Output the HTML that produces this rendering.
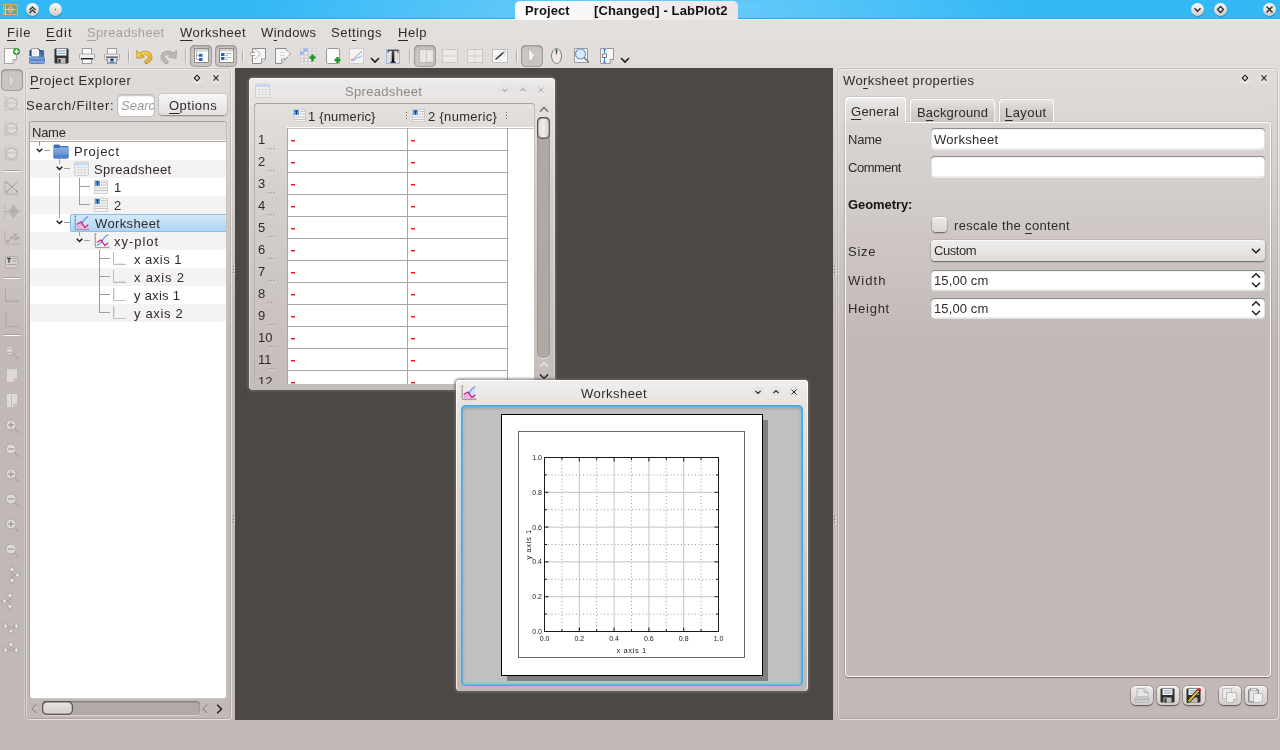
<!DOCTYPE html>
<html><head><meta charset="utf-8">
<style>
*{box-sizing:border-box}
html,body{margin:0;padding:0}
body{width:1280px;height:750px;position:relative;overflow:hidden;font-family:"Liberation Sans",sans-serif;font-size:13px;color:#2f2b2a;
background:linear-gradient(to bottom,#e3e0de 19px,#dedad8 90px,#d2ccca 200px,#c2b9b6 340px,#c2b9b6 750px)}
.a{position:absolute}
.t{position:absolute;white-space:pre;line-height:15px;height:15px;will-change:transform}
.ul{text-decoration:underline;text-decoration-thickness:1px;text-underline-offset:3px}
svg{overflow:visible}
</style></head><body>
<div class="a" style="left:0;top:0;width:1280px;height:18px;background:#33b8f6"></div>
<div class="a" style="left:250px;top:0;width:780px;height:18px;background:radial-gradient(ellipse 390px 40px at 50% 50%,rgba(140,215,250,0.75),rgba(51,184,246,0))"></div>
<div class="a" style="left:0;top:18px;width:1280px;height:1px;background:#25a9e6"></div>
<div class="a" style="left:0;top:19px;width:1280px;height:1px;background:#e9f3f7"></div>
<div class="a" style="left:515px;top:1px;width:223px;height:19px;border-radius:5px 5px 0 0;background:linear-gradient(100deg,#ffffff,#f1efee 60%,#e9e6e4)"></div>
<div class="a" style="left:640px;top:1px;width:220px;height:17px;background:linear-gradient(90deg,rgba(255,255,255,0),rgba(255,255,255,0))"></div>
<div class="t" style="left:525px;top:3px;font-weight:bold;letter-spacing:0.1px;color:#111">Project</div>
<div class="t" style="left:594px;top:3px;font-weight:bold;letter-spacing:0.15px;color:#111">[Changed] - LabPlot2</div>
<svg class="a" style="left:3px;top:4px" width="15" height="11" viewBox="0 0 15 11">
<rect x="0" y="0" width="15" height="11" fill="#dcae62"/>
<rect x="1.2" y="1.2" width="12.6" height="8.6" fill="#77a070"/>
<path d="M7.5 1.8 L10.5 5.5 L7.5 9.2 L4.5 5.5Z" fill="#e09088" stroke="#f2d8d0" stroke-width="0.6"/><path d="M2 5.5 H13" stroke="#f0c8c0" stroke-width="0.8"/>
<path d="M2.5 1.5 V11" stroke="#e8f0e8" stroke-width="0.9" opacity="0.8"/></svg>
<svg class="a" style="left:24.5px;top:1.5px;opacity:1.0" width="16.0" height="16.0" viewBox="-7.5 -7.5 16.0 16.0">
<defs><linearGradient id="cg32" x1="0" y1="0" x2="0" y2="1"><stop offset="0" stop-color="#fbfbfb"/><stop offset="1" stop-color="#cfcbc9"/></linearGradient></defs>
<circle cx="0.3" cy="0.8" r="6.5" fill="#000" opacity="0.25"/>
<circle cx="0" cy="0" r="6.5" fill="url(#cg32)"/><path d="M-3 0.5 L0 -2.5 L3 0.5 M-3 3.5 L0 0.5 L3 3.5" stroke="#2a2726" stroke-width="1.2" fill="none"/></svg>
<svg class="a" style="left:47.5px;top:1.5px;opacity:1.0" width="16.0" height="16.0" viewBox="-7.5 -7.5 16.0 16.0">
<defs><linearGradient id="cg55" x1="0" y1="0" x2="0" y2="1"><stop offset="0" stop-color="#fbfbfb"/><stop offset="1" stop-color="#cfcbc9"/></linearGradient></defs>
<circle cx="0.3" cy="0.8" r="6.5" fill="#000" opacity="0.25"/>
<circle cx="0" cy="0" r="6.5" fill="url(#cg55)"/><circle cx="0" cy="0" r="0.7" fill="#555"/></svg>
<svg class="a" style="left:1189.5px;top:1.5px;opacity:1.0" width="16.0" height="16.0" viewBox="-7.5 -7.5 16.0 16.0">
<defs><linearGradient id="cg1197" x1="0" y1="0" x2="0" y2="1"><stop offset="0" stop-color="#fbfbfb"/><stop offset="1" stop-color="#cfcbc9"/></linearGradient></defs>
<circle cx="0.3" cy="0.8" r="6.5" fill="#000" opacity="0.25"/>
<circle cx="0" cy="0" r="6.5" fill="url(#cg1197)"/><path d="M-3 -1.2 L0 1.8 L3 -1.2" stroke="#2a2726" stroke-width="1.3" fill="none"/></svg>
<svg class="a" style="left:1212.5px;top:1.5px;opacity:1.0" width="16.0" height="16.0" viewBox="-7.5 -7.5 16.0 16.0">
<defs><linearGradient id="cg1220" x1="0" y1="0" x2="0" y2="1"><stop offset="0" stop-color="#fbfbfb"/><stop offset="1" stop-color="#cfcbc9"/></linearGradient></defs>
<circle cx="0.3" cy="0.8" r="6.5" fill="#000" opacity="0.25"/>
<circle cx="0" cy="0" r="6.5" fill="url(#cg1220)"/><path d="M0 -3 L3 0 L0 3 L-3 0Z" stroke="#2a2726" stroke-width="1.3" fill="none"/></svg>
<svg class="a" style="left:1261.5px;top:1.5px;opacity:1.0" width="16.0" height="16.0" viewBox="-7.5 -7.5 16.0 16.0">
<defs><linearGradient id="cg1269" x1="0" y1="0" x2="0" y2="1"><stop offset="0" stop-color="#fbfbfb"/><stop offset="1" stop-color="#cfcbc9"/></linearGradient></defs>
<circle cx="0.3" cy="0.8" r="6.5" fill="#000" opacity="0.25"/>
<circle cx="0" cy="0" r="6.5" fill="url(#cg1269)"/><path d="M-3 -3 L3 3 M3 -3 L-3 3" stroke="#2a2726" stroke-width="1.3" fill="none"/></svg>
<div class="t" style="left:7.20px;top:25.00px;letter-spacing:0.882px;"><span class="ul">F</span>ile</div>
<div class="t" style="left:46.20px;top:25.00px;letter-spacing:1.098px;"><span class="ul">E</span>dit</div>
<div class="t" style="left:87.20px;top:25.00px;letter-spacing:0.347px;color:#a5a19f;"><span class="ul">S</span>preadsheet</div>
<div class="t" style="left:179.70px;top:25.00px;letter-spacing:0.462px;"><span class="ul">W</span>orksheet</div>
<div class="t" style="left:261.20px;top:25.00px;letter-spacing:0.375px;">W<span class="ul">i</span>ndows</div>
<div class="t" style="left:331.20px;top:25.00px;letter-spacing:0.517px;">Set<span class="ul">t</span>ings</div>
<div class="t" style="left:397.70px;top:25.00px;letter-spacing:0.550px;"><span class="ul">H</span>elp</div>
<svg class="a" style="left:4px;top:48px;" width="16" height="16" viewBox="0 0 16 16"><path d="M0.5 0.5 H12.5 V11.5 L9 15.5 H0.5Z" fill="#fbfbfb" stroke="#a6a3a2"/><path d="M12.5 11.5 L9 11.5 L9 15.5" fill="#dcdcdc" stroke="#a6a3a2"/><circle cx="12.5" cy="3.5" r="3.5" fill="#1fa81f"/><path d="M12.5 1.3 V5.7 M10.3 3.5 H14.7" stroke="#fff" stroke-width="1.4"/></svg>
<svg class="a" style="left:29px;top:48px;" width="16" height="16" viewBox="0 0 16 16"><path d="M0.5 2 H3 V8 H0.5Z" fill="#1d3e78"/><path d="M2.5 0.5 H9 L12.5 4 V9 H2.5Z" fill="#f4f4f4" stroke="#8d8d8d" stroke-width="0.8"/><path d="M10 2 H15 V9 H10Z" fill="#4a78c0"/><path d="M9 0.5 L15 6.5" stroke="#16356b" stroke-width="1"/><rect x="0.5" y="9" width="15" height="6.5" rx="1" fill="#7fa6dc" stroke="#4e78b8" stroke-width="0.8"/><path d="M1 12 H15" stroke="#3f68a8" stroke-width="1"/></svg>
<svg class="a" style="left:54px;top:48px;" width="16" height="16" viewBox="0 0 16 16"><rect x="0.5" y="0.5" width="14" height="15" rx="1" fill="#2f2f2f"/><rect x="2.5" y="1" width="10" height="6.5" fill="#f2f6fa"/><path d="M3.5 3 H11.5 M3.5 5.3 H11.5" stroke="#7fa0c4" stroke-width="1"/><rect x="3.5" y="10" width="8" height="5.5" fill="#bdbdbd"/><rect x="4.5" y="11" width="2" height="4" fill="#2f2f2f"/></svg>
<svg class="a" style="left:79px;top:48px;" width="16" height="16" viewBox="0 0 16 16"><rect x="3.5" y="0.5" width="9" height="6" fill="#fbfbfb" stroke="#9c9c9c"/><rect x="0.5" y="6" width="15" height="5.5" rx="1" fill="#f0f0f0" stroke="#a8a8a8"/><rect x="2" y="10" width="12" height="1.5" fill="#222"/><rect x="3.5" y="11.5" width="9" height="4" fill="#fafafa" stroke="#9c9c9c"/></svg>
<svg class="a" style="left:104px;top:48px;" width="16" height="16" viewBox="0 0 16 16"><rect x="3.5" y="0.5" width="9" height="6" fill="#fbfbfb" stroke="#9c9c9c"/><rect x="0.5" y="6" width="15" height="5.5" rx="1" fill="#f0f0f0" stroke="#a8a8a8"/><rect x="2" y="8.5" width="12" height="1.2" fill="#444"/><rect x="3.5" y="11.5" width="9" height="4" fill="#fafafa" stroke="#9c9c9c"/><ellipse cx="8" cy="12" rx="5" ry="2.6" fill="#eee" stroke="#666" stroke-width="0.8"/><circle cx="8" cy="12" r="2.1" fill="#2e7fd0"/><circle cx="8" cy="12" r="0.9" fill="#0d2a4a"/></svg>
<div class="a" style="left:128px;top:47px;width:1px;height:18px;background:linear-gradient(rgba(160,152,149,0),#b3aca9 30%,#b3aca9 70%,rgba(160,152,149,0))"></div><div class="a" style="left:129px;top:47px;width:1px;height:18px;background:linear-gradient(rgba(255,255,255,0),#f4f2f1 30%,#f4f2f1 70%,rgba(255,255,255,0))"></div>
<svg class="a" style="left:136px;top:48px;" width="16" height="16" viewBox="0 0 16 16"><defs><linearGradient id="ug" x1="0" y1="0" x2="1" y2="1"><stop offset="0" stop-color="#f7dc55"/><stop offset="1" stop-color="#dcae35"/></linearGradient></defs><path d="M5 6.5 C8.5 3.8 14.5 4.8 14.3 9.2 C14.2 11.5 12.5 12.8 10.5 13.8" stroke="#b88a14" stroke-width="4.2" fill="none" stroke-linecap="round"/><path d="M5 6.5 C8.5 3.8 14.5 4.8 14.3 9.2 C14.2 11.5 12.5 12.8 10.5 13.8" stroke="url(#ug)" stroke-width="3" fill="none" stroke-linecap="round"/><path d="M0.5 2.5 L1 10.5 L8.5 9 Z" fill="url(#ug)" stroke="#b88a14" stroke-width="0.7" stroke-linejoin="round"/></svg>
<svg class="a" style="left:161px;top:48px;" width="16" height="16" viewBox="0 0 16 16"><g transform="translate(16,0) scale(-1,1)"><path d="M5 6.5 C8.5 3.8 14.5 4.8 14.3 9.2 C14.2 11.5 12.5 12.8 10.5 13.8" stroke="#a29f9d" stroke-width="4.2" fill="none" stroke-linecap="round"/><path d="M5 6.5 C8.5 3.8 14.5 4.8 14.3 9.2 C14.2 11.5 12.5 12.8 10.5 13.8" stroke="#bcb9b7" stroke-width="3" fill="none" stroke-linecap="round"/><path d="M0.5 2.5 L1 10.5 L8.5 9 Z" fill="#bcb9b7" stroke="#a29f9d" stroke-width="0.7" stroke-linejoin="round"/></g></svg>
<div class="a" style="left:185px;top:47px;width:1px;height:18px;background:linear-gradient(rgba(160,152,149,0),#b3aca9 30%,#b3aca9 70%,rgba(160,152,149,0))"></div><div class="a" style="left:186px;top:47px;width:1px;height:18px;background:linear-gradient(rgba(255,255,255,0),#f4f2f1 30%,#f4f2f1 70%,rgba(255,255,255,0))"></div>
<div class="a" style="left:190px;top:45px;width:22px;height:22px;border-radius:5px;background:#cbc5c2;box-shadow:inset 0 0 0 1px #a39c99, inset 0 1px 2px rgba(0,0,0,0.4)"></div>
<svg class="a" style="left:194px;top:48px;" width="15" height="15" viewBox="0 0 15 15"><rect x="0.5" y="0.5" width="14" height="14" fill="#fff" stroke="#8f8c8b"/><rect x="1" y="1" width="13" height="2.5" fill="#d3d3d3"/><path d="M2.5 3.5 V11.5 H5 M2.5 7.5 H5" stroke="#999" stroke-width="0.8" fill="none"/><rect x="5" y="5.8" width="3.5" height="3" fill="#1e63d6"/><rect x="5" y="10" width="3.5" height="3" fill="#1e63d6"/></svg>
<div class="a" style="left:215px;top:45px;width:22px;height:22px;border-radius:5px;background:#cbc5c2;box-shadow:inset 0 0 0 1px #a39c99, inset 0 1px 2px rgba(0,0,0,0.4)"></div>
<svg class="a" style="left:219px;top:48px;" width="15" height="15" viewBox="0 0 15 15"><rect x="0.5" y="0.5" width="14" height="14" fill="#fff" stroke="#8f8c8b"/><rect x="1" y="1" width="13" height="2.5" fill="#d3d3d3"/><rect x="2" y="5" width="3.5" height="3" fill="#1e63d6"/><rect x="2" y="9" width="3.5" height="3" fill="#1e63d6"/><path d="M6.5 5.5 H12 M6.5 7.5 H9 M6.5 9.5 H12 M6.5 11.5 H9" stroke="#9c9c9c" stroke-width="0.8"/></svg>
<div class="a" style="left:242px;top:47px;width:1px;height:18px;background:linear-gradient(rgba(160,152,149,0),#b3aca9 30%,#b3aca9 70%,rgba(160,152,149,0))"></div><div class="a" style="left:243px;top:47px;width:1px;height:18px;background:linear-gradient(rgba(255,255,255,0),#f4f2f1 30%,#f4f2f1 70%,rgba(255,255,255,0))"></div>
<svg class="a" style="left:250px;top:48px;" width="16" height="16" viewBox="0 0 16 16"><path d="M2.5 0.5 H15.5 V11 L11 15.5 H2.5Z" fill="#f7f7f7" stroke="#8e8b8a"/><path d="M15.5 11 H11.5 V15.5" fill="#e4e4e4" stroke="#8e8b8a" stroke-width="0.8"/><rect x="0.5" y="4.5" width="6" height="3" rx="1.2" fill="#fdfdfd" stroke="#8e8b8a" stroke-width="0.8"/><path d="M5 0.8 L10.5 6 L5 11.2 Z" fill="#fbfbfb"/><path d="M5 0.8 L10.5 6 L5 11.2" stroke="#777" stroke-width="0.9" fill="none" stroke-dasharray="1.2 0.8"/><rect x="1.3" y="5.3" width="5" height="1.5" fill="#fdfdfd"/></svg>
<svg class="a" style="left:275px;top:48px;" width="16" height="16" viewBox="0 0 16 16"><path d="M0.5 0.5 H11 V11 L6.5 15.5 H0.5Z" fill="#f5f5f5" stroke="#8e8b8a"/><path d="M10.5 11 L6.5 11 V15.5" fill="#e4e4e4" stroke="#8e8b8a" stroke-width="0.8"/><path d="M10 0.5 L15.5 6 L10 11.5 Z" fill="#fafafa"/><path d="M10 0.5 L15.5 6 L10 11.5" stroke="#555" stroke-width="0.9" fill="none" stroke-dasharray="1.2 0.8"/><path d="M5 4.5 H10.5 M5 7.5 H10.5" stroke="#d0d0d0" stroke-width="0.8"/></svg>
<svg class="a" style="left:300px;top:48px;" width="16" height="16" viewBox="0 0 16 16"><rect x="0.5" y="0.5" width="3.3" height="2.7" fill="#ececec" stroke="#c8c8c8" stroke-width="0.5"/><rect x="4.5" y="0.5" width="3.3" height="2.7" fill="#ececec" stroke="#c8c8c8" stroke-width="0.5"/><rect x="8.5" y="0.5" width="3.3" height="2.7" fill="#ececec" stroke="#c8c8c8" stroke-width="0.5"/><rect x="12.5" y="0.5" width="3.3" height="2.7" fill="#ececec" stroke="#c8c8c8" stroke-width="0.5"/><rect x="0.5" y="3.8" width="3.3" height="2.7" fill="#ececec" stroke="#c8c8c8" stroke-width="0.5"/><rect x="4.5" y="3.8" width="3.3" height="2.7" fill="#ececec" stroke="#c8c8c8" stroke-width="0.5"/><rect x="8.5" y="3.8" width="3.3" height="2.7" fill="#ececec" stroke="#c8c8c8" stroke-width="0.5"/><rect x="12.5" y="3.8" width="3.3" height="2.7" fill="#ececec" stroke="#c8c8c8" stroke-width="0.5"/><rect x="0.5" y="7.1" width="3.3" height="2.7" fill="#ececec" stroke="#c8c8c8" stroke-width="0.5"/><rect x="4.5" y="7.1" width="3.3" height="2.7" fill="#ececec" stroke="#c8c8c8" stroke-width="0.5"/><rect x="8.5" y="7.1" width="3.3" height="2.7" fill="#ececec" stroke="#c8c8c8" stroke-width="0.5"/><rect x="12.5" y="7.1" width="3.3" height="2.7" fill="#ececec" stroke="#c8c8c8" stroke-width="0.5"/><rect x="0.5" y="10.399999999999999" width="3.3" height="2.7" fill="#ececec" stroke="#c8c8c8" stroke-width="0.5"/><rect x="4.5" y="10.399999999999999" width="3.3" height="2.7" fill="#ececec" stroke="#c8c8c8" stroke-width="0.5"/><rect x="8.5" y="10.399999999999999" width="3.3" height="2.7" fill="#ececec" stroke="#c8c8c8" stroke-width="0.5"/><rect x="12.5" y="10.399999999999999" width="3.3" height="2.7" fill="#ececec" stroke="#c8c8c8" stroke-width="0.5"/><rect x="0.5" y="13.7" width="3.3" height="2.7" fill="#ececec" stroke="#c8c8c8" stroke-width="0.5"/><rect x="4.5" y="13.7" width="3.3" height="2.7" fill="#ececec" stroke="#c8c8c8" stroke-width="0.5"/><rect x="8.5" y="13.7" width="3.3" height="2.7" fill="#ececec" stroke="#c8c8c8" stroke-width="0.5"/><rect x="12.5" y="13.7" width="3.3" height="2.7" fill="#ececec" stroke="#c8c8c8" stroke-width="0.5"/><rect x="3.5" y="0.5" width="4" height="3" fill="#8fb3f0"/><rect x="0" y="3.5" width="3.5" height="3" fill="#8fb3f0"/><path d="M9.5 9.5 H15.5 M12.5 6.5 V13.5" stroke="#1d9a1d" stroke-width="2.4"/></svg>
<svg class="a" style="left:326px;top:48px;" width="15" height="16" viewBox="0 0 15 16"><rect x="0.5" y="0.5" width="13" height="15" rx="1" fill="#fafafa" stroke="#9c9998"/><path d="M8.5 12 H14.5 M11.5 9 V15" stroke="#1d9a1d" stroke-width="2.4"/></svg>
<svg class="a" style="left:349px;top:48px;" width="15" height="16" viewBox="0 0 15 16"><rect x="0.5" y="0.5" width="14" height="15" fill="#f3f3f3" stroke="#b5b2b1" stroke-dasharray="1 1"/><path d="M2 11.5 L5 11 L7.5 8 L11 5 L13 3" stroke="#d880c8" stroke-width="1" fill="none"/><path d="M2 13 L5 12.5 L8 10 L11 9 L13 8" stroke="#8eb4ec" stroke-width="1" fill="none"/></svg>
<svg class="a" style="left:370px;top:57px;" width="10" height="7" viewBox="0 0 10 7"><path d="M1 1 L5 5 L9 1" stroke="#1f1c1b" stroke-width="1.6" fill="none"/></svg>
<svg class="a" style="left:385px;top:48px;" width="16" height="16" viewBox="0 0 16 16"><defs><linearGradient id="tg" x1="0" y1="0" x2="0" y2="1"><stop offset="0" stop-color="#555"/><stop offset="1" stop-color="#000"/></linearGradient></defs><path d="M1.5 1 V15.5 M14.5 1 V15.5 M0.5 15.5 H15.5" stroke="#8cb4ee" stroke-width="0.8"/><path d="M2.5 1.5 H13.5 V4.5 L12.5 4.5 L11.8 3 H9.3 V13.5 L10.8 14 V14.8 H5.2 V14 L6.7 13.5 V3 H4.2 L3.5 4.5 H2.5Z" fill="url(#tg)"/></svg>
<div class="a" style="left:409px;top:47px;width:1px;height:18px;background:linear-gradient(rgba(160,152,149,0),#b3aca9 30%,#b3aca9 70%,rgba(160,152,149,0))"></div><div class="a" style="left:410px;top:47px;width:1px;height:18px;background:linear-gradient(rgba(255,255,255,0),#f4f2f1 30%,#f4f2f1 70%,rgba(255,255,255,0))"></div>
<div class="a" style="left:414px;top:45px;width:22px;height:22px;border-radius:5px;background:#cbc5c2;box-shadow:inset 0 0 0 1px #a39c99, inset 0 1px 2px rgba(0,0,0,0.4)"></div>
<svg class="a" style="left:419px;top:49px;" width="15" height="14" viewBox="0 0 15 14"><rect x="0.5" y="0.5" width="14" height="13" fill="#e9e6e4" stroke="#bbb6b4"/><path d="M7.5 0.5 V13.5" stroke="#cfcac8"/></svg>
<svg class="a" style="left:442px;top:49px;" width="16" height="14" viewBox="0 0 16 14"><rect x="0.5" y="0.5" width="15" height="13" fill="#ece9e8" stroke="#cac6c4"/><path d="M0.5 7 H15.5" stroke="#d3cfcd"/></svg>
<svg class="a" style="left:467px;top:49px;" width="16" height="14" viewBox="0 0 16 14"><rect x="0.5" y="0.5" width="15" height="13" fill="#ece9e8" stroke="#cac6c4"/><path d="M0.5 7 H15.5 M8 0.5 V13.5" stroke="#d3cfcd"/></svg>
<svg class="a" style="left:492px;top:49px;" width="16" height="14" viewBox="0 0 16 14"><rect x="0.5" y="0.5" width="15" height="13" fill="#fbfbfb" stroke="#c1bdbb"/><path d="M0.5 7 H15.5 M8 0.5 V13.5" stroke="#e3e0de"/><path d="M3.5 10.5 L11.5 3.5" stroke="#333" stroke-width="1.6"/><path d="M10.5 2 L13.5 2.5 L12.5 5.5" stroke="#bbb" stroke-width="1" fill="none"/></svg>
<div class="a" style="left:516px;top:47px;width:1px;height:18px;background:linear-gradient(rgba(160,152,149,0),#b3aca9 30%,#b3aca9 70%,rgba(160,152,149,0))"></div><div class="a" style="left:517px;top:47px;width:1px;height:18px;background:linear-gradient(rgba(255,255,255,0),#f4f2f1 30%,#f4f2f1 70%,rgba(255,255,255,0))"></div>
<div class="a" style="left:521px;top:45px;width:22px;height:22px;border-radius:5px;background:#cbc5c2;box-shadow:inset 0 0 0 1px #a39c99, inset 0 1px 2px rgba(0,0,0,0.4)"></div>
<svg class="a" style="left:527px;top:48px;" width="10" height="14" viewBox="0 0 10 14"><path d="M1.5 0.5 L9 8.5 L6 9 L5.5 13.5 L1.5 11 Z" fill="#f2f2f2" stroke="#b8b4b2" stroke-width="0.8"/></svg>
<svg class="a" style="left:551px;top:48px;" width="11" height="16" viewBox="0 0 11 16"><ellipse cx="5.5" cy="8" rx="5" ry="7.5" fill="#eaeaea" stroke="#7f7c7b"/><path d="M5.5 0.8 V6" stroke="#666" stroke-width="1"/><rect x="4.7" y="2" width="1.6" height="2.8" fill="#444"/><circle cx="5.5" cy="6" r="0.7" fill="#d44"/></svg>
<svg class="a" style="left:574px;top:48px;" width="16" height="16" viewBox="0 0 16 16"><path d="M0.5 0.5 H13.5 V14.5 H0.5Z" fill="#f6f6f6" stroke="#9a9796"/><circle cx="6.5" cy="6" r="5" fill="#d8ecfc" stroke="#6c9cd8" stroke-width="1.2"/><path d="M10 9.5 L15 14.5" stroke="#777" stroke-width="1.4"/></svg>
<svg class="a" style="left:600px;top:48px;" width="14" height="16" viewBox="0 0 14 16"><path d="M0.5 0.5 H13.5 V11.5 L10 15.5 H0.5Z" fill="#f8f8f8" stroke="#9a9796"/><path d="M13.5 11.5 L10 11.5 L10 15.5" fill="#e0e0e0" stroke="#9a9796"/><path d="M4.5 1 V5.5 M4.5 10 V15" stroke="#2a7ee8" stroke-width="1"/><path d="M3 2.5 L4.5 1 L6 2.5 M3 13.5 L4.5 15 L6 13.5" stroke="#2a7ee8" stroke-width="1" fill="none"/><rect x="2.5" y="6" width="4" height="3.5" fill="#fff" stroke="#666" stroke-width="0.8"/></svg>
<svg class="a" style="left:620px;top:57px;" width="10" height="7" viewBox="0 0 10 7"><path d="M1 1 L5 5 L9 1" stroke="#1f1c1b" stroke-width="1.6" fill="none"/></svg>
<div class="a" style="left:235px;top:68px;width:598px;height:652px;background:#4c4845"></div>
<div class="a" style="left:1px;top:69px;width:22px;height:22px;border-radius:5px;background:#cbc5c2;box-shadow:inset 0 0 0 1px #a39c99, inset 0 1px 2px rgba(0,0,0,0.4)"></div>
<svg class="a" style="left:7px;top:73px;" width="10" height="14" viewBox="0 0 10 14"><path d="M1.5 0.5 L9 8.5 L6 9 L5.5 13.5 L1.5 11 Z" fill="#d8d4d2" stroke="#bdb8b6" stroke-width="0.8"/></svg>
<svg class="a" style="left:4px;top:96px;" width="15" height="15" viewBox="0 0 15 15"><circle cx="7.5" cy="7.5" r="5.5" fill="#dedad8" stroke="#a8a3a1" stroke-width="0.8"/><path d="M3 7 H12" stroke="#c6c1bf" stroke-width="1"/><path d="M1 1 L3 3 M14 1 L12 3 M1 14 L3 12 M14 14 L12 12 M1 14 H14 M1 1 V14" stroke="#a8a3a1" stroke-width="0.7" stroke-dasharray="1 1" fill="none"/></svg>
<svg class="a" style="left:4px;top:121px;" width="15" height="15" viewBox="0 0 15 15"><circle cx="7.5" cy="7.5" r="5.5" fill="#dedad8" stroke="#a8a3a1" stroke-width="0.8"/><path d="M3 7 H12" stroke="#c6c1bf" stroke-width="1"/><path d="M1 1 L3 3 M14 1 L12 3 M1 14 L3 12 M14 14 L12 12 M1 14 H14 M1 1 V14" stroke="#a8a3a1" stroke-width="0.7" stroke-dasharray="1 1" fill="none"/></svg>
<svg class="a" style="left:4px;top:146px;" width="15" height="15" viewBox="0 0 15 15"><circle cx="7.5" cy="7.5" r="5.5" fill="#dedad8" stroke="#a8a3a1" stroke-width="0.8"/><path d="M3 7 H12" stroke="#c6c1bf" stroke-width="1"/><path d="M1 1 L3 3 M14 1 L12 3 M1 14 L3 12 M14 14 L12 12 M1 14 H14 M1 1 V14" stroke="#a8a3a1" stroke-width="0.7" stroke-dasharray="1 1" fill="none"/></svg>
<div class="a" style="left:1px;top:170px;width:22px;height:1px;background:linear-gradient(90deg,rgba(170,162,159,0),#a69e9b 30%,#a69e9b 70%,rgba(170,162,159,0))"></div><div class="a" style="left:1px;top:171px;width:22px;height:1px;background:linear-gradient(90deg,rgba(255,255,255,0),#ffffff 30%,#ffffff 70%,rgba(255,255,255,0))"></div>
<svg class="a" style="left:4px;top:180px;" width="16" height="16" viewBox="0 0 16 16"><path d="M1 0.5 V14 H15.5" stroke="#a8a3a1" stroke-width="0.8" fill="none" stroke-dasharray="1 0.6"/><path d="M0 3 H1 M0 6 H1 M0 9 H1 M4 14 V15 M7 14 V15 M10 14 V15 M13 14 V15" stroke="#a8a3a1" stroke-width="0.7"/><path d="M2.5 2.5 L6.5 5.5 L13 11.5 M2.5 12 L8 7 L13 2.5" stroke="#a49f9d" stroke-width="1" fill="none"/><g fill="#9a9593"><circle cx="2.5" cy="2.5" r="1"/><circle cx="13" cy="11.5" r="1"/><circle cx="2.5" cy="12" r="1"/><circle cx="6.5" cy="5.5" r="0.8"/></g></svg>
<svg class="a" style="left:4px;top:204px;" width="16" height="16" viewBox="0 0 16 16"><path d="M1 0.5 V15" stroke="#a8a3a1" stroke-width="0.8" stroke-dasharray="1 0.6"/><path d="M9.5 1 L14 7.5 L9.5 14 L5 7.5Z" fill="#c3bdba" stroke="#aaa4a2" stroke-width="0.8"/><path d="M1 7.5 H16" stroke="#a8a3a1" stroke-width="0.8"/><path d="M9.5 3.5 L12 7.5 L9.5 11.5 L7 7.5Z" fill="#b3adaa"/></svg>
<svg class="a" style="left:4px;top:230px;" width="16" height="16" viewBox="0 0 16 16"><path d="M1 0.5 V14 H15.5" stroke="#a8a3a1" stroke-width="0.8" fill="none" stroke-dasharray="1 0.6"/><path d="M0 3 H1 M0 6 H1 M0 9 H1 M4 14 V15 M7 14 V15 M10 14 V15 M13 14 V15" stroke="#a8a3a1" stroke-width="0.7"/><path d="M2 13 L14 3" stroke="#b2acaa" stroke-width="0.8"/><g fill="none" stroke="#9a9593" stroke-width="0.8"><circle cx="7.5" cy="8" r="1"/><circle cx="11" cy="5" r="1"/><circle cx="11.5" cy="9" r="1"/><circle cx="4" cy="11" r="1"/><circle cx="14" cy="7.5" r="0.9"/></g></svg>
<svg class="a" style="left:5px;top:256px;" width="14" height="13" viewBox="0 0 14 13"><rect x="0.5" y="0.5" width="12.5" height="11.5" rx="1" fill="#d6d1cf" stroke="#a9a3a1" stroke-width="0.8"/><path d="M2 2.3 H6 M4 2.3 V6.8" stroke="#3d3a39" stroke-width="1.3"/><path d="M7.5 2.5 H11.5 M7.5 5 H11.5 M2 8.5 H11.5" stroke="#9c9795" stroke-width="0.8"/></svg>
<div class="a" style="left:1px;top:277px;width:22px;height:1px;background:linear-gradient(90deg,rgba(170,162,159,0),#a69e9b 30%,#a69e9b 70%,rgba(170,162,159,0))"></div><div class="a" style="left:1px;top:278px;width:22px;height:1px;background:linear-gradient(90deg,rgba(255,255,255,0),#ffffff 30%,#ffffff 70%,rgba(255,255,255,0))"></div>
<svg class="a" style="left:4px;top:287px;" width="16" height="15" viewBox="0 0 16 15"><path d="M1.5 0.5 V14.5 H15" stroke="#a8a3a1" stroke-width="0.8" fill="none"/><path d="M4 14 V12.5 M7 14 V12.5 M10 14 V12.5 M13 14 V12.5" stroke="#a8a3a1" stroke-width="0.8"/></svg>
<svg class="a" style="left:4px;top:312px;" width="16" height="15" viewBox="0 0 16 15"><path d="M1.5 0.5 V14.5 H15" stroke="#a8a3a1" stroke-width="0.8" fill="none"/><path d="M2 3 H3.5 M2 6 H3.5 M2 9 H3.5 M2 12 H3.5" stroke="#a8a3a1" stroke-width="0.8"/></svg>
<div class="a" style="left:1px;top:334px;width:22px;height:1px;background:linear-gradient(90deg,rgba(170,162,159,0),#a69e9b 30%,#a69e9b 70%,rgba(170,162,159,0))"></div><div class="a" style="left:1px;top:335px;width:22px;height:1px;background:linear-gradient(90deg,rgba(255,255,255,0),#ffffff 30%,#ffffff 70%,rgba(255,255,255,0))"></div>
<svg class="a" style="left:4px;top:345px;" width="16" height="14" viewBox="0 0 16 14"><circle cx="5.5" cy="5.5" r="4.5" fill="#dedad8" stroke="#a8a3a1" stroke-width="0.9"/><rect x="3" y="3.5" width="5" height="4" fill="none" stroke="#a8a3a1" stroke-width="0.7"/><path d="M9 9 L14 13.5" stroke="#a8a3a1" stroke-width="1.2"/></svg>
<svg class="a" style="left:6px;top:368px;" width="12" height="15" viewBox="0 0 12 15"><path d="M0.5 0.5 H11.5 V11 L8 14.5 H0.5Z" fill="#dedad8" stroke="#b9b4b2" stroke-width="0.8"/><path d="M11.5 11 L8 11 V14.5" fill="#ccc7c5" stroke="#b9b4b2" stroke-width="0.8"/><path d="M2 2 H10" stroke="#a8a3a1" stroke-width="0.6" stroke-dasharray="1 1"/></svg>
<svg class="a" style="left:6px;top:393px;" width="12" height="15" viewBox="0 0 12 15"><path d="M0.5 0.5 H11.5 V11 L8 14.5 H0.5Z" fill="#dedad8" stroke="#b9b4b2" stroke-width="0.8"/><path d="M11.5 11 L8 11 V14.5" fill="#ccc7c5" stroke="#b9b4b2" stroke-width="0.8"/><path d="M5.5 2 V13" stroke="#a8a3a1" stroke-width="0.6"/></svg>
<svg class="a" style="left:5px;top:419px;" width="15" height="15" viewBox="0 0 15 15"><circle cx="6" cy="6" r="5" fill="#dedad8" stroke="#a8a3a1" stroke-width="0.9"/><path d="M3 6 H9 M6 3 V9" stroke="#8f8a88" stroke-width="1"/><path d="M9.5 9.5 L14 14" stroke="#a8a3a1" stroke-width="1.2"/></svg>
<svg class="a" style="left:5px;top:443px;" width="15" height="15" viewBox="0 0 15 15"><circle cx="6" cy="6" r="5" fill="#dedad8" stroke="#a8a3a1" stroke-width="0.9"/><path d="M3 6 H9" stroke="#8f8a88" stroke-width="1"/><path d="M9.5 9.5 L14 14" stroke="#a8a3a1" stroke-width="1.2"/></svg>
<svg class="a" style="left:5px;top:468px;" width="15" height="15" viewBox="0 0 15 15"><circle cx="6" cy="6" r="5" fill="#dedad8" stroke="#a8a3a1" stroke-width="0.9"/><path d="M3 6 H9 M6 3 V9" stroke="#8f8a88" stroke-width="1"/><path d="M9.5 9.5 L14 14" stroke="#a8a3a1" stroke-width="1.2"/></svg>
<svg class="a" style="left:5px;top:493px;" width="15" height="15" viewBox="0 0 15 15"><circle cx="6" cy="6" r="5" fill="#dedad8" stroke="#a8a3a1" stroke-width="0.9"/><path d="M3 6 H9" stroke="#8f8a88" stroke-width="1"/><path d="M9.5 9.5 L14 14" stroke="#a8a3a1" stroke-width="1.2"/></svg>
<svg class="a" style="left:5px;top:518px;" width="15" height="15" viewBox="0 0 15 15"><circle cx="6" cy="6" r="5" fill="#dedad8" stroke="#a8a3a1" stroke-width="0.9"/><path d="M3 6 H9 M6 3 V9" stroke="#8f8a88" stroke-width="1"/><path d="M9.5 9.5 L14 14" stroke="#a8a3a1" stroke-width="1.2"/></svg>
<svg class="a" style="left:5px;top:543px;" width="15" height="15" viewBox="0 0 15 15"><circle cx="6" cy="6" r="5" fill="#dedad8" stroke="#a8a3a1" stroke-width="0.9"/><path d="M3 6 H9" stroke="#8f8a88" stroke-width="1"/><path d="M9.5 9.5 L14 14" stroke="#a8a3a1" stroke-width="1.2"/></svg>
<svg class="a" style="left:3px;top:566px;" width="18" height="18" viewBox="0 0 18 18"><g stroke="#a29d9b" stroke-width="1"><path d="M9 9 L9 3.5"/><path d="M9 9 L9 14.5"/><path d="M9 9 L14.5 9"/></g><g fill="#e4e0de" stroke="#9d9896" stroke-width="0.9"><path d="M9 0.2999999999999998 L11.56 3.5 L9 6.7 L6.4399999999999995 3.5Z"/><path d="M9 11.3 L11.56 14.5 L9 17.7 L6.4399999999999995 14.5Z"/><path d="M14.5 5.8 L17.060000000000002 9 L14.5 12.2 L11.94 9Z"/></g><circle cx="9" cy="9" r="1.3" fill="#dcd8d6" stroke="#9d9896" stroke-width="0.7"/></svg>
<svg class="a" style="left:1px;top:592px;" width="18" height="18" viewBox="0 0 18 18"><g stroke="#a29d9b" stroke-width="1"><path d="M9 9 L9 3.5"/><path d="M9 9 L9 14.5"/><path d="M9 9 L3.5 9"/></g><g fill="#e4e0de" stroke="#9d9896" stroke-width="0.9"><path d="M9 0.2999999999999998 L11.56 3.5 L9 6.7 L6.4399999999999995 3.5Z"/><path d="M9 11.3 L11.56 14.5 L9 17.7 L6.4399999999999995 14.5Z"/><path d="M3.5 5.8 L6.0600000000000005 9 L3.5 12.2 L0.9399999999999995 9Z"/></g><circle cx="9" cy="9" r="1.3" fill="#dcd8d6" stroke="#9d9896" stroke-width="0.7"/></svg>
<svg class="a" style="left:2px;top:619px;" width="18" height="18" viewBox="0 0 18 18"><g stroke="#a29d9b" stroke-width="1"><path d="M9 9 L3.5 7"/><path d="M9 9 L14.5 7"/><path d="M9 9 L9 12"/></g><g fill="#e4e0de" stroke="#9d9896" stroke-width="0.9"><path d="M3.5 3.8 L6.0600000000000005 7 L3.5 10.2 L0.9399999999999995 7Z"/><path d="M14.5 3.8 L17.060000000000002 7 L14.5 10.2 L11.94 7Z"/><path d="M9 8.8 L11.56 12 L9 15.2 L6.4399999999999995 12Z"/></g><circle cx="9" cy="9" r="1.3" fill="#dcd8d6" stroke="#9d9896" stroke-width="0.7"/></svg>
<svg class="a" style="left:2px;top:640px;" width="18" height="18" viewBox="0 0 18 18"><g stroke="#a29d9b" stroke-width="1"><path d="M9 9 L3.5 10"/><path d="M9 9 L14.5 10"/><path d="M9 9 L9 4.5"/></g><g fill="#e4e0de" stroke="#9d9896" stroke-width="0.9"><path d="M3.5 6.8 L6.0600000000000005 10 L3.5 13.2 L0.9399999999999995 10Z"/><path d="M14.5 6.8 L17.060000000000002 10 L14.5 13.2 L11.94 10Z"/><path d="M9 1.2999999999999998 L11.56 4.5 L9 7.7 L6.4399999999999995 4.5Z"/></g><circle cx="9" cy="9" r="1.3" fill="#dcd8d6" stroke="#9d9896" stroke-width="0.7"/></svg>
<div class="a" style="left:24px;top:67px;width:208px;height:653px;border-radius:5px;border:1px solid rgba(255,255,255,0.3)"></div>
<div class="a" style="left:26px;top:69px;width:206px;height:651px;border-radius:4px;border:1px solid rgba(255,255,255,0.45)"></div>
<div class="a" style="left:25px;top:68px;width:206px;height:651px;border-radius:4px;border:1px solid rgba(90,80,75,0.2)"></div>
<div class="t" style="left:30.20px;top:73.00px;letter-spacing:0.561px;"><span class="ul">P</span>roject Explorer</div>
<svg class="a" style="left:191px;top:72px" width="12" height="12" viewBox="-6 -6 12 12"><circle cx="0" cy="0.5" r="5.2" fill="#ffffff" opacity="0.45"/><circle cx="0" cy="0" r="4.8" fill="#e3dfdd"/><path d="M0 -2.8 L2.8 0 L0 2.8 L-2.8 0Z" stroke="#1f1c1b" stroke-width="1.1" fill="none"/></svg>
<svg class="a" style="left:210px;top:72px" width="12" height="12" viewBox="-6 -6 12 12"><circle cx="0" cy="0.5" r="5.2" fill="#ffffff" opacity="0.45"/><circle cx="0" cy="0" r="4.8" fill="#e3dfdd"/><path d="M-2.6 -2.6 L2.6 2.6 M2.6 -2.6 L-2.6 2.6" stroke="#1f1c1b" stroke-width="1.05"/></svg>
<div class="t" style="left:26.20px;top:98.00px;letter-spacing:0.799px;">Search/Filter:</div>
<div class="a" style="left:118px;top:95px;width:36px;height:21px;border-radius:4px;background:#fff;box-shadow:inset 0 1px 1.5px rgba(0,0,0,0.25),0 0 0 1px rgba(0,0,0,0.12)"></div>
<div class="a" style="left:118px;top:95px;width:36px;height:20px;overflow:hidden"><div class="t" style="left:3px;top:3px;font-style:italic;color:#9a9796">Search</div></div>
<div class="a" style="left:159px;top:94px;width:68px;height:21px;border-radius:4px;background:linear-gradient(#f7f6f5,#e3e0de);box-shadow:0 1px 1.5px rgba(0,0,0,0.35),0 0 0 0.5px rgba(0,0,0,0.12)"></div>
<div class="t" style="left:169.20px;top:98.00px;letter-spacing:0.481px;"><span class="ul">O</span>ptions</div>
<div class="a" style="left:29px;top:121px;width:198px;height:578px;border-radius:4px;background:#fff;box-shadow:inset 0 1px 0 #a59e9b, inset 1px 0 0 #aba4a1, inset -1px 0 0 #c9c3c0, inset 0 -1px 0 #cfc9c6;overflow:hidden"><div class="a" style="left:1px;top:1px;width:196px;height:19px;background:#dcd8d6;border-radius:3px 3px 0 0"></div><div class="a" style="left:1px;top:19px;width:196px;height:1px;background:#fff"></div><div class="a" style="left:1px;top:20px;width:196px;height:1px;background:#b0a9a6"></div></div>
<div class="t" style="left:32.20px;top:125.00px;letter-spacing:-0.262px;">Name</div>
<div class="a" style="left:30px;top:160px;width:196px;height:18px;background:#f5f3f2"></div>
<div class="a" style="left:30px;top:196px;width:196px;height:18px;background:#f5f3f2"></div>
<div class="a" style="left:30px;top:232px;width:196px;height:18px;background:#f5f3f2"></div>
<div class="a" style="left:30px;top:268px;width:196px;height:18px;background:#f5f3f2"></div>
<div class="a" style="left:30px;top:304px;width:196px;height:18px;background:#f5f3f2"></div>
<div class="a" style="left:70px;top:214px;width:156px;height:18px;border-radius:3px 0 0 3px;background:linear-gradient(#d6eafa,#acd3f2);box-shadow:inset 1px 0 0 #86c1ea,inset 0 1px 0 #86c1ea,inset 0 -1px 0 #86c1ea"></div>
<div class="a" style="left:39px;top:141px;width:1px;height:5px;background:#a19c9a"></div>
<svg class="a" style="left:36px;top:148px;" width="7" height="5" viewBox="0 0 7 5"><path d="M0.7 0.7 L3.5 3.5 L6.3 0.7" stroke="#1f1c1b" stroke-width="1.5" fill="none"/></svg>
<div class="a" style="left:44px;top:150px;width:6px;height:1px;background:#a19c9a"></div>
<div class="a" style="left:59px;top:159px;width:1px;height:5px;background:#a19c9a"></div>
<svg class="a" style="left:56px;top:166px;" width="7" height="5" viewBox="0 0 7 5"><path d="M0.7 0.7 L3.5 3.5 L6.3 0.7" stroke="#1f1c1b" stroke-width="1.5" fill="none"/></svg>
<div class="a" style="left:64px;top:168px;width:6px;height:1px;background:#a19c9a"></div>
<div class="a" style="left:59px;top:173px;width:1px;height:45px;background:#a19c9a"></div>
<svg class="a" style="left:56px;top:220px;" width="7" height="5" viewBox="0 0 7 5"><path d="M0.7 0.7 L3.5 3.5 L6.3 0.7" stroke="#1f1c1b" stroke-width="1.5" fill="none"/></svg>
<div class="a" style="left:64px;top:222px;width:6px;height:1px;background:#a19c9a"></div>
<div class="a" style="left:79px;top:178px;width:1px;height:27px;background:#a19c9a"></div>
<div class="a" style="left:80px;top:186px;width:10px;height:1px;background:#a19c9a"></div>
<div class="a" style="left:80px;top:204px;width:10px;height:1px;background:#a19c9a"></div>
<div class="a" style="left:79px;top:232px;width:1px;height:4px;background:#a19c9a"></div>
<svg class="a" style="left:76px;top:238px;" width="7" height="5" viewBox="0 0 7 5"><path d="M0.7 0.7 L3.5 3.5 L6.3 0.7" stroke="#1f1c1b" stroke-width="1.5" fill="none"/></svg>
<div class="a" style="left:84px;top:240px;width:6px;height:1px;background:#a19c9a"></div>
<div class="a" style="left:99px;top:250px;width:1px;height:63px;background:#a19c9a"></div>
<div class="a" style="left:100px;top:258px;width:10px;height:1px;background:#a19c9a"></div>
<div class="a" style="left:100px;top:276px;width:10px;height:1px;background:#a19c9a"></div>
<div class="a" style="left:100px;top:294px;width:10px;height:1px;background:#a19c9a"></div>
<div class="a" style="left:100px;top:312px;width:10px;height:1px;background:#a19c9a"></div>
<svg class="a" style="left:53px;top:144px;" width="16" height="15" viewBox="0 0 16 15"><defs><linearGradient id="fg" x1="0" y1="0" x2="0" y2="1"><stop offset="0" stop-color="#8db2e2"/><stop offset="1" stop-color="#4f82c6"/></linearGradient></defs><path d="M0.5 1.5 Q0.5 0.5 1.5 0.5 H6 L7.5 2 H14.5 Q15.5 2 15.5 3 V13 Q15.5 14.5 14 14.5 H2 Q0.5 14.5 0.5 13Z" fill="#3f6fb5"/><path d="M0.5 5 Q0.5 4 1.5 4 H6 L7 3.2 H14.5 Q15.5 3.2 15.5 4.2 V13 Q15.5 14.5 14 14.5 H2 Q0.5 14.5 0.5 13Z" fill="url(#fg)"/><path d="M1 12 H15" stroke="#3e6db0" stroke-width="0.8"/></svg>
<svg class="a" style="left:74px;top:161px;" width="15" height="15" viewBox="0 0 15 15"><rect x="0.5" y="1" width="14" height="13.5" rx="1" fill="#f2f2f2" stroke="#c9c9c9" stroke-width="0.8"/><rect x="1" y="1.5" width="13" height="2.5" fill="#c4d8f2"/><path d="M4.25 4 V14" stroke="#d6d6d6" stroke-width="0.7"/><path d="M7.5 4 V14" stroke="#d6d6d6" stroke-width="0.7"/><path d="M10.75 4 V14" stroke="#d6d6d6" stroke-width="0.7"/><path d="M1 6.5 H14" stroke="#d6d6d6" stroke-width="0.7"/><path d="M1 9.0 H14" stroke="#d6d6d6" stroke-width="0.7"/><path d="M1 11.5 H14" stroke="#d6d6d6" stroke-width="0.7"/></svg>
<svg class="a" style="left:94px;top:180px;" width="14" height="14" viewBox="0 0 14 14"><rect x="0.5" y="0.5" width="13" height="13" fill="#f4f4f4" stroke="#c9c9c9" stroke-width="0.8"/><rect x="1" y="1" width="5" height="5" fill="#5f9be8"/><path d="M2 2 H5 M3.5 2 V5.5" stroke="#0d2f6b" stroke-width="0.9"/><path d="M7 2.5 H13 M7 5 H13 M1 8 H13 M1 10.5 H13" stroke="#c5c5c5" stroke-width="1.1"/></svg>
<svg class="a" style="left:94px;top:198px;" width="14" height="14" viewBox="0 0 14 14"><rect x="0.5" y="0.5" width="13" height="13" fill="#f4f4f4" stroke="#c9c9c9" stroke-width="0.8"/><rect x="1" y="1" width="5" height="5" fill="#5f9be8"/><path d="M2 2 H5 M3.5 2 V5.5" stroke="#0d2f6b" stroke-width="0.9"/><path d="M7 2.5 H13 M7 5 H13 M1 8 H13 M1 10.5 H13" stroke="#c5c5c5" stroke-width="1.1"/></svg>
<svg class="a" style="left:73px;top:215px;" width="16" height="16" viewBox="0 0 16 16"><path d="M4 12.6 C6 11.5 7.5 10.5 9 8.5 C11 4.5 13 2.5 15.2 1.8 V14 H4Z" fill="#cfe0fa"/><path d="M3.8 9.4 L7.9 6.9 L12 12.6 L15.2 9.8 V14 H3.8Z" fill="#f6b6e2" opacity="0.95"/><path d="M4 12.6 C6 11.5 7.5 10.5 9 8.5" stroke="#b59be8" stroke-width="0.8" fill="none"/><path d="M2.3 0.5 V14.4 H16" stroke="#8a8888" stroke-width="0.8" fill="none"/><path d="M1.2 2 L2.3 0.5 L3.4 2 M14.8 13.3 L16.2 14.4 L14.8 15.5" stroke="#8a8888" stroke-width="0.6" fill="none"/><path d="M1.3 5.5 H2.3 M1.3 8.5 H2.3 M1.3 11.5 H2.3 M5 14.4 V15.4 M8 14.4 V15.4 M11 14.4 V15.4" stroke="#8a8888" stroke-width="0.7"/><path d="M9 8.5 C11 4.5 13 2.5 15.2 1.8" stroke="#4f8ff0" stroke-width="1.1" fill="none"/><path d="M3.8 9.4 L7.9 6.9 L12 12.6 L15.2 9.8" stroke="#c81f78" stroke-width="1.2" fill="none" stroke-linejoin="round"/></svg>
<svg class="a" style="left:93px;top:233px;" width="16" height="16" viewBox="0 0 16 16"><path d="M2.3 0.5 V14.4 H16" stroke="#8a8888" stroke-width="0.8" fill="none"/><path d="M1.2 2 L2.3 0.5 L3.4 2 M14.8 13.3 L16.2 14.4 L14.8 15.5" stroke="#8a8888" stroke-width="0.6" fill="none"/><path d="M1.3 5.5 H2.3 M1.3 8.5 H2.3 M1.3 11.5 H2.3 M5 14.4 V15.4 M8 14.4 V15.4 M11 14.4 V15.4" stroke="#8a8888" stroke-width="0.7"/><path d="M9 8.5 C11 4.5 13 2.5 15.2 1.8" stroke="#4f8ff0" stroke-width="1.1" fill="none"/><path d="M4 12.6 C6 11.5 7.5 10.5 9 8.5" stroke="#4f8ff0" stroke-width="1.1" fill="none"/><path d="M3.8 9.4 L7.9 6.9 L12 12.6 L15.2 9.8" stroke="#c81f78" stroke-width="1.2" fill="none" stroke-linejoin="round"/></svg>
<svg class="a" style="left:112px;top:251px;" width="15" height="15" viewBox="0 0 15 15"><path d="M1.5 1 V13.5 H14" stroke="#b0acaa" stroke-width="0.8" fill="none"/><path d="M4 13.5 V12 M6 13.5 V12.5 M8 13.5 V12 M10 13.5 V12.5 M12 13.5 V12" stroke="#b0acaa" stroke-width="0.7"/></svg>
<svg class="a" style="left:112px;top:269px;" width="15" height="15" viewBox="0 0 15 15"><path d="M1.5 1 V13.5 H14" stroke="#b0acaa" stroke-width="0.8" fill="none"/><path d="M4 13.5 V12 M6 13.5 V12.5 M8 13.5 V12 M10 13.5 V12.5 M12 13.5 V12" stroke="#b0acaa" stroke-width="0.7"/></svg>
<svg class="a" style="left:112px;top:287px;" width="15" height="15" viewBox="0 0 15 15"><path d="M1.5 1 V13.5 H14" stroke="#b0acaa" stroke-width="0.8" fill="none"/><path d="M1.5 3 H3 M1.5 5 H2.5 M1.5 7 H3 M1.5 9 H2.5 M1.5 11 H3" stroke="#b0acaa" stroke-width="0.7"/></svg>
<svg class="a" style="left:112px;top:305px;" width="15" height="15" viewBox="0 0 15 15"><path d="M1.5 1 V13.5 H14" stroke="#b0acaa" stroke-width="0.8" fill="none"/><path d="M1.5 3 H3 M1.5 5 H2.5 M1.5 7 H3 M1.5 9 H2.5 M1.5 11 H3" stroke="#b0acaa" stroke-width="0.7"/></svg>
<div class="t" style="left:74.20px;top:144.00px;letter-spacing:0.755px;">Project</div>
<div class="t" style="left:94.20px;top:162.00px;letter-spacing:0.347px;">Spreadsheet</div>
<div class="t" style="left:114.20px;top:180.00px;">1</div>
<div class="t" style="left:114.20px;top:198.00px;">2</div>
<div class="t" style="left:95.20px;top:216.00px;letter-spacing:0.374px;">Worksheet</div>
<div class="t" style="left:113.70px;top:234.00px;letter-spacing:0.984px;">xy-plot</div>
<div class="t" style="left:134.20px;top:252.00px;letter-spacing:0.489px;">x axis 1</div>
<div class="t" style="left:134.20px;top:270.00px;letter-spacing:0.846px;">x axis 2</div>
<div class="t" style="left:134.20px;top:288.00px;letter-spacing:0.260px;">y axis 1</div>
<div class="t" style="left:134.20px;top:306.00px;letter-spacing:0.660px;">y axis 2</div>
<svg class="a" style="left:31px;top:704px;" width="7" height="10" viewBox="0 0 7 10"><path d="M5.5 1.6 L1.8 5.5 L5.5 9.6" stroke="#f4f2f1" stroke-width="1.2" fill="none"/><path d="M5.5 0.8 L1.2 5 L5.5 9.2" stroke="#8f8886" stroke-width="1.2" fill="none"/></svg>
<div class="a" style="left:42px;top:701px;width:158px;height:14px;border-radius:4px;background:#b2aaa7;box-shadow:inset 0 1px 2px rgba(0,0,0,0.35),0 1px 0 rgba(255,255,255,0.4)"></div>
<div class="a" style="left:44px;top:703px;width:27px;height:10px;border-radius:3px;background:linear-gradient(#e6e3e1,#d3cfcd);box-shadow:0 0 0 0.6px #f4f2f1,0 0 0 2px rgba(75,68,65,0.8)"></div>
<svg class="a" style="left:202px;top:704px;" width="7" height="10" viewBox="0 0 7 10"><path d="M5.5 1.6 L1.8 5.5 L5.5 9.6" stroke="#f4f2f1" stroke-width="1.2" fill="none"/><path d="M5.5 0.8 L1.2 5 L5.5 9.2" stroke="#8f8886" stroke-width="1.2" fill="none"/></svg>
<svg class="a" style="left:216px;top:704px;" width="7" height="10" viewBox="0 0 7 10"><path d="M1.2 0.8 L5.5 5 L1.2 9.2" stroke="#1f1c1b" stroke-width="1.5" fill="none"/></svg>
<div class="a" style="left:233px;top:266px;width:1px;height:1px;background:#857d7a"></div><div class="a" style="left:234px;top:267px;width:1px;height:1px;background:#f2efee"></div>
<div class="a" style="left:233px;top:269px;width:1px;height:1px;background:#857d7a"></div><div class="a" style="left:234px;top:270px;width:1px;height:1px;background:#f2efee"></div>
<div class="a" style="left:233px;top:272px;width:1px;height:1px;background:#857d7a"></div><div class="a" style="left:234px;top:273px;width:1px;height:1px;background:#f2efee"></div>
<div class="a" style="left:233px;top:516px;width:1px;height:1px;background:#857d7a"></div><div class="a" style="left:234px;top:517px;width:1px;height:1px;background:#f2efee"></div>
<div class="a" style="left:233px;top:519px;width:1px;height:1px;background:#857d7a"></div><div class="a" style="left:234px;top:520px;width:1px;height:1px;background:#f2efee"></div>
<div class="a" style="left:233px;top:522px;width:1px;height:1px;background:#857d7a"></div><div class="a" style="left:234px;top:523px;width:1px;height:1px;background:#f2efee"></div>
<div class="a" style="left:834px;top:266px;width:1px;height:1px;background:#857d7a"></div><div class="a" style="left:835px;top:267px;width:1px;height:1px;background:#f2efee"></div>
<div class="a" style="left:834px;top:269px;width:1px;height:1px;background:#857d7a"></div><div class="a" style="left:835px;top:270px;width:1px;height:1px;background:#f2efee"></div>
<div class="a" style="left:834px;top:272px;width:1px;height:1px;background:#857d7a"></div><div class="a" style="left:835px;top:273px;width:1px;height:1px;background:#f2efee"></div>
<div class="a" style="left:834px;top:516px;width:1px;height:1px;background:#857d7a"></div><div class="a" style="left:835px;top:517px;width:1px;height:1px;background:#f2efee"></div>
<div class="a" style="left:834px;top:519px;width:1px;height:1px;background:#857d7a"></div><div class="a" style="left:835px;top:520px;width:1px;height:1px;background:#f2efee"></div>
<div class="a" style="left:834px;top:522px;width:1px;height:1px;background:#857d7a"></div><div class="a" style="left:835px;top:523px;width:1px;height:1px;background:#f2efee"></div>
<div class="a" style="left:249px;top:78px;width:306px;height:312px;border-radius:4px;box-shadow:0 0 2px 1.5px rgba(110,107,105,0.55)"></div>
<div class="a" style="left:249px;top:78px;width:306px;height:312px;border-radius:4px;background:linear-gradient(#eeeceb 0px,#e2dfdd 30px,#d4cfcd 120px,#c5bdba 300px);box-shadow:inset 0 1px 0 rgba(255,255,255,0.9),inset 1px 0 0 rgba(255,255,255,0.35),inset -1px 0 0 rgba(255,255,255,0.35)"></div>
<svg class="a" style="left:255px;top:83px;" width="15" height="15" viewBox="0 0 15 15"><rect x="0.5" y="1" width="14" height="13.5" rx="1" fill="#f2f2f2" stroke="#c9c9c9" stroke-width="0.8"/><rect x="1" y="1.5" width="13" height="2.5" fill="#c4d8f2"/><path d="M4.25 4 V14" stroke="#d6d6d6" stroke-width="0.7"/><path d="M7.5 4 V14" stroke="#d6d6d6" stroke-width="0.7"/><path d="M10.75 4 V14" stroke="#d6d6d6" stroke-width="0.7"/><path d="M1 6.5 H14" stroke="#d6d6d6" stroke-width="0.7"/><path d="M1 9.0 H14" stroke="#d6d6d6" stroke-width="0.7"/><path d="M1 11.5 H14" stroke="#d6d6d6" stroke-width="0.7"/></svg>
<div class="t" style="left:345.45px;top:84.00px;letter-spacing:0.322px;color:#8e8a88;">Spreadsheet</div>
<svg class="a" style="left:499px;top:84px;opacity:1.0" width="12" height="13" viewBox="-6 -6 12 13"><circle cx="0" cy="0.6" r="5.2" fill="#fff" opacity="0.7"/><circle cx="0" cy="0" r="5" fill="#e9e7e6" stroke="#d5d1cf" stroke-width="0.5"/><path d="M-2.6 -1.1 L0 1.5 L2.6 -1.1" stroke="#a9a5a3" stroke-width="1.1" fill="none"/></svg>
<svg class="a" style="left:517px;top:84px;opacity:1.0" width="12" height="13" viewBox="-6 -6 12 13"><circle cx="0" cy="0.6" r="5.2" fill="#fff" opacity="0.7"/><circle cx="0" cy="0" r="5" fill="#e9e7e6" stroke="#d5d1cf" stroke-width="0.5"/><path d="M-2.6 1.1 L0 -1.5 L2.6 1.1" stroke="#a9a5a3" stroke-width="1.1" fill="none"/></svg>
<svg class="a" style="left:535px;top:84px;opacity:1.0" width="12" height="13" viewBox="-6 -6 12 13"><circle cx="0" cy="0.6" r="5.2" fill="#fff" opacity="0.7"/><circle cx="0" cy="0" r="5" fill="#e9e7e6" stroke="#d5d1cf" stroke-width="0.5"/><path d="M-2.5 -2.5 L2.5 2.5 M2.5 -2.5 L-2.5 2.5" stroke="#a9a5a3" stroke-width="0.95"/></svg>
<div class="a" style="left:254px;top:103px;width:281px;height:282px;border-radius:4px;overflow:hidden;box-shadow:inset 0 1px 0 #a7a09d, inset 1px 0 0 #b8b1ae, inset 0 -1px 0 rgba(255,255,255,0.6)"><div class="a" style="left:33px;top:24px;width:248px;height:257px;background:#fff"></div></div>
<div class="a" style="left:287px;top:150px;width:221px;height:1px;background:#aca4a1"></div>
<div class="a" style="left:287px;top:172px;width:221px;height:1px;background:#aca4a1"></div>
<div class="a" style="left:287px;top:194px;width:221px;height:1px;background:#aca4a1"></div>
<div class="a" style="left:287px;top:216px;width:221px;height:1px;background:#aca4a1"></div>
<div class="a" style="left:287px;top:238px;width:221px;height:1px;background:#aca4a1"></div>
<div class="a" style="left:287px;top:260px;width:221px;height:1px;background:#aca4a1"></div>
<div class="a" style="left:287px;top:282px;width:221px;height:1px;background:#aca4a1"></div>
<div class="a" style="left:287px;top:304px;width:221px;height:1px;background:#aca4a1"></div>
<div class="a" style="left:287px;top:326px;width:221px;height:1px;background:#aca4a1"></div>
<div class="a" style="left:287px;top:348px;width:221px;height:1px;background:#aca4a1"></div>
<div class="a" style="left:287px;top:370px;width:221px;height:1px;background:#aca4a1"></div>
<div class="a" style="left:287px;top:128px;width:247px;height:1px;background:#c9c3c0"></div>
<div class="a" style="left:534px;top:104px;width:1px;height:280px;background:#c4bdba"></div>
<div class="a" style="left:287px;top:128px;width:1px;height:256px;background:#aca4a1"></div>
<div class="a" style="left:407px;top:128px;width:1px;height:256px;background:#aca4a1"></div>
<div class="a" style="left:507px;top:128px;width:1px;height:256px;background:#aca4a1"></div>
<div class="a" style="left:291px;top:140px;width:4px;height:1px;background:#ee1010"></div><div class="a" style="left:291px;top:141px;width:4px;height:1px;background:#f59a9a"></div>
<div class="a" style="left:411px;top:140px;width:4px;height:1px;background:#ee1010"></div><div class="a" style="left:411px;top:141px;width:4px;height:1px;background:#f59a9a"></div>
<div class="t" style="left:258px;top:132px;font-size:13px;line-height:15px;color:#2f2b2a;">1</div>
<svg class="a" style="left:267px;top:148px" width="10" height="3" viewBox="0 0 10 3"><g fill="#f7f5f4"><rect x="1" y="1" width="1.3" height="1.3"/><rect x="4" y="1" width="1.3" height="1.3"/><rect x="7" y="1" width="1.3" height="1.3"/></g><g fill="#8a8381"><rect x="0.5" y="0.3" width="1.2" height="1.2"/><rect x="3.5" y="0.3" width="1.2" height="1.2"/><rect x="6.5" y="0.3" width="1.2" height="1.2"/></g></svg>
<div class="a" style="left:291px;top:162px;width:4px;height:1px;background:#ee1010"></div><div class="a" style="left:291px;top:163px;width:4px;height:1px;background:#f59a9a"></div>
<div class="a" style="left:411px;top:162px;width:4px;height:1px;background:#ee1010"></div><div class="a" style="left:411px;top:163px;width:4px;height:1px;background:#f59a9a"></div>
<div class="t" style="left:258px;top:154px;font-size:13px;line-height:15px;color:#2f2b2a;">2</div>
<svg class="a" style="left:267px;top:170px" width="10" height="3" viewBox="0 0 10 3"><g fill="#f7f5f4"><rect x="1" y="1" width="1.3" height="1.3"/><rect x="4" y="1" width="1.3" height="1.3"/><rect x="7" y="1" width="1.3" height="1.3"/></g><g fill="#8a8381"><rect x="0.5" y="0.3" width="1.2" height="1.2"/><rect x="3.5" y="0.3" width="1.2" height="1.2"/><rect x="6.5" y="0.3" width="1.2" height="1.2"/></g></svg>
<div class="a" style="left:291px;top:184px;width:4px;height:1px;background:#ee1010"></div><div class="a" style="left:291px;top:185px;width:4px;height:1px;background:#f59a9a"></div>
<div class="a" style="left:411px;top:184px;width:4px;height:1px;background:#ee1010"></div><div class="a" style="left:411px;top:185px;width:4px;height:1px;background:#f59a9a"></div>
<div class="t" style="left:258px;top:176px;font-size:13px;line-height:15px;color:#2f2b2a;">3</div>
<svg class="a" style="left:267px;top:192px" width="10" height="3" viewBox="0 0 10 3"><g fill="#f7f5f4"><rect x="1" y="1" width="1.3" height="1.3"/><rect x="4" y="1" width="1.3" height="1.3"/><rect x="7" y="1" width="1.3" height="1.3"/></g><g fill="#8a8381"><rect x="0.5" y="0.3" width="1.2" height="1.2"/><rect x="3.5" y="0.3" width="1.2" height="1.2"/><rect x="6.5" y="0.3" width="1.2" height="1.2"/></g></svg>
<div class="a" style="left:291px;top:206px;width:4px;height:1px;background:#ee1010"></div><div class="a" style="left:291px;top:207px;width:4px;height:1px;background:#f59a9a"></div>
<div class="a" style="left:411px;top:206px;width:4px;height:1px;background:#ee1010"></div><div class="a" style="left:411px;top:207px;width:4px;height:1px;background:#f59a9a"></div>
<div class="t" style="left:258px;top:198px;font-size:13px;line-height:15px;color:#2f2b2a;">4</div>
<svg class="a" style="left:267px;top:214px" width="10" height="3" viewBox="0 0 10 3"><g fill="#f7f5f4"><rect x="1" y="1" width="1.3" height="1.3"/><rect x="4" y="1" width="1.3" height="1.3"/><rect x="7" y="1" width="1.3" height="1.3"/></g><g fill="#8a8381"><rect x="0.5" y="0.3" width="1.2" height="1.2"/><rect x="3.5" y="0.3" width="1.2" height="1.2"/><rect x="6.5" y="0.3" width="1.2" height="1.2"/></g></svg>
<div class="a" style="left:291px;top:228px;width:4px;height:1px;background:#ee1010"></div><div class="a" style="left:291px;top:229px;width:4px;height:1px;background:#f59a9a"></div>
<div class="a" style="left:411px;top:228px;width:4px;height:1px;background:#ee1010"></div><div class="a" style="left:411px;top:229px;width:4px;height:1px;background:#f59a9a"></div>
<div class="t" style="left:258px;top:220px;font-size:13px;line-height:15px;color:#2f2b2a;">5</div>
<svg class="a" style="left:267px;top:236px" width="10" height="3" viewBox="0 0 10 3"><g fill="#f7f5f4"><rect x="1" y="1" width="1.3" height="1.3"/><rect x="4" y="1" width="1.3" height="1.3"/><rect x="7" y="1" width="1.3" height="1.3"/></g><g fill="#8a8381"><rect x="0.5" y="0.3" width="1.2" height="1.2"/><rect x="3.5" y="0.3" width="1.2" height="1.2"/><rect x="6.5" y="0.3" width="1.2" height="1.2"/></g></svg>
<div class="a" style="left:291px;top:250px;width:4px;height:1px;background:#ee1010"></div><div class="a" style="left:291px;top:251px;width:4px;height:1px;background:#f59a9a"></div>
<div class="a" style="left:411px;top:250px;width:4px;height:1px;background:#ee1010"></div><div class="a" style="left:411px;top:251px;width:4px;height:1px;background:#f59a9a"></div>
<div class="t" style="left:258px;top:242px;font-size:13px;line-height:15px;color:#2f2b2a;">6</div>
<svg class="a" style="left:267px;top:258px" width="10" height="3" viewBox="0 0 10 3"><g fill="#f7f5f4"><rect x="1" y="1" width="1.3" height="1.3"/><rect x="4" y="1" width="1.3" height="1.3"/><rect x="7" y="1" width="1.3" height="1.3"/></g><g fill="#8a8381"><rect x="0.5" y="0.3" width="1.2" height="1.2"/><rect x="3.5" y="0.3" width="1.2" height="1.2"/><rect x="6.5" y="0.3" width="1.2" height="1.2"/></g></svg>
<div class="a" style="left:291px;top:272px;width:4px;height:1px;background:#ee1010"></div><div class="a" style="left:291px;top:273px;width:4px;height:1px;background:#f59a9a"></div>
<div class="a" style="left:411px;top:272px;width:4px;height:1px;background:#ee1010"></div><div class="a" style="left:411px;top:273px;width:4px;height:1px;background:#f59a9a"></div>
<div class="t" style="left:258px;top:264px;font-size:13px;line-height:15px;color:#2f2b2a;">7</div>
<svg class="a" style="left:267px;top:280px" width="10" height="3" viewBox="0 0 10 3"><g fill="#f7f5f4"><rect x="1" y="1" width="1.3" height="1.3"/><rect x="4" y="1" width="1.3" height="1.3"/><rect x="7" y="1" width="1.3" height="1.3"/></g><g fill="#8a8381"><rect x="0.5" y="0.3" width="1.2" height="1.2"/><rect x="3.5" y="0.3" width="1.2" height="1.2"/><rect x="6.5" y="0.3" width="1.2" height="1.2"/></g></svg>
<div class="a" style="left:291px;top:294px;width:4px;height:1px;background:#ee1010"></div><div class="a" style="left:291px;top:295px;width:4px;height:1px;background:#f59a9a"></div>
<div class="a" style="left:411px;top:294px;width:4px;height:1px;background:#ee1010"></div><div class="a" style="left:411px;top:295px;width:4px;height:1px;background:#f59a9a"></div>
<div class="t" style="left:258px;top:286px;font-size:13px;line-height:15px;color:#2f2b2a;">8</div>
<svg class="a" style="left:267px;top:302px" width="10" height="3" viewBox="0 0 10 3"><g fill="#f7f5f4"><rect x="1" y="1" width="1.3" height="1.3"/><rect x="4" y="1" width="1.3" height="1.3"/><rect x="7" y="1" width="1.3" height="1.3"/></g><g fill="#8a8381"><rect x="0.5" y="0.3" width="1.2" height="1.2"/><rect x="3.5" y="0.3" width="1.2" height="1.2"/><rect x="6.5" y="0.3" width="1.2" height="1.2"/></g></svg>
<div class="a" style="left:291px;top:316px;width:4px;height:1px;background:#ee1010"></div><div class="a" style="left:291px;top:317px;width:4px;height:1px;background:#f59a9a"></div>
<div class="a" style="left:411px;top:316px;width:4px;height:1px;background:#ee1010"></div><div class="a" style="left:411px;top:317px;width:4px;height:1px;background:#f59a9a"></div>
<div class="t" style="left:258px;top:308px;font-size:13px;line-height:15px;color:#2f2b2a;">9</div>
<svg class="a" style="left:267px;top:324px" width="10" height="3" viewBox="0 0 10 3"><g fill="#f7f5f4"><rect x="1" y="1" width="1.3" height="1.3"/><rect x="4" y="1" width="1.3" height="1.3"/><rect x="7" y="1" width="1.3" height="1.3"/></g><g fill="#8a8381"><rect x="0.5" y="0.3" width="1.2" height="1.2"/><rect x="3.5" y="0.3" width="1.2" height="1.2"/><rect x="6.5" y="0.3" width="1.2" height="1.2"/></g></svg>
<div class="a" style="left:291px;top:338px;width:4px;height:1px;background:#ee1010"></div><div class="a" style="left:291px;top:339px;width:4px;height:1px;background:#f59a9a"></div>
<div class="a" style="left:411px;top:338px;width:4px;height:1px;background:#ee1010"></div><div class="a" style="left:411px;top:339px;width:4px;height:1px;background:#f59a9a"></div>
<div class="t" style="left:258px;top:330px;font-size:13px;line-height:15px;color:#2f2b2a;">10</div>
<svg class="a" style="left:267px;top:346px" width="10" height="3" viewBox="0 0 10 3"><g fill="#f7f5f4"><rect x="1" y="1" width="1.3" height="1.3"/><rect x="4" y="1" width="1.3" height="1.3"/><rect x="7" y="1" width="1.3" height="1.3"/></g><g fill="#8a8381"><rect x="0.5" y="0.3" width="1.2" height="1.2"/><rect x="3.5" y="0.3" width="1.2" height="1.2"/><rect x="6.5" y="0.3" width="1.2" height="1.2"/></g></svg>
<div class="a" style="left:291px;top:360px;width:4px;height:1px;background:#ee1010"></div><div class="a" style="left:291px;top:361px;width:4px;height:1px;background:#f59a9a"></div>
<div class="a" style="left:411px;top:360px;width:4px;height:1px;background:#ee1010"></div><div class="a" style="left:411px;top:361px;width:4px;height:1px;background:#f59a9a"></div>
<div class="t" style="left:258px;top:352px;font-size:13px;line-height:15px;color:#2f2b2a;">11</div>
<svg class="a" style="left:267px;top:368px" width="10" height="3" viewBox="0 0 10 3"><g fill="#f7f5f4"><rect x="1" y="1" width="1.3" height="1.3"/><rect x="4" y="1" width="1.3" height="1.3"/><rect x="7" y="1" width="1.3" height="1.3"/></g><g fill="#8a8381"><rect x="0.5" y="0.3" width="1.2" height="1.2"/><rect x="3.5" y="0.3" width="1.2" height="1.2"/><rect x="6.5" y="0.3" width="1.2" height="1.2"/></g></svg>
<div class="a" style="left:291px;top:382px;width:4px;height:1px;background:#ee1010"></div><div class="a" style="left:291px;top:383px;width:4px;height:1px;background:#f59a9a"></div>
<div class="a" style="left:411px;top:382px;width:4px;height:1px;background:#ee1010"></div><div class="a" style="left:411px;top:383px;width:4px;height:1px;background:#f59a9a"></div>
<div class="t" style="left:258px;top:374px;font-size:13px;line-height:15px;color:#2f2b2a;clip-path:inset(0 0 3px 0)">12</div>
<svg class="a" style="left:293px;top:109px;" width="13" height="13" viewBox="0 0 13 13"><rect x="0.5" y="0.5" width="12" height="12" fill="#f4f4f4" stroke="#c9c9c9" stroke-width="0.8"/><rect x="1" y="1" width="5" height="5" fill="#5f9be8"/><path d="M2 2 H5 M3.5 2 V5.5" stroke="#0d2f6b" stroke-width="0.9"/><path d="M7 2.5 H13 M7 5 H13 M1 8 H13 M1 10.5 H13" stroke="#c5c5c5" stroke-width="1.1"/></svg>
<div class="t" style="left:308.20px;top:109.00px;letter-spacing:0.168px;">1 {numeric}</div>
<svg class="a" style="left:412px;top:109px;" width="13" height="13" viewBox="0 0 13 13"><rect x="0.5" y="0.5" width="12" height="12" fill="#f4f4f4" stroke="#c9c9c9" stroke-width="0.8"/><rect x="1" y="1" width="5" height="5" fill="#5f9be8"/><path d="M2 2 H5 M3.5 2 V5.5" stroke="#0d2f6b" stroke-width="0.9"/><path d="M7 2.5 H13 M7 5 H13 M1 8 H13 M1 10.5 H13" stroke="#c5c5c5" stroke-width="1.1"/></svg>
<div class="t" style="left:428.20px;top:109.00px;letter-spacing:0.303px;">2 {numeric}</div>
<div class="a" style="left:406px;top:112px;width:1px;height:1px;background:#6d6563"></div>
<div class="a" style="left:406px;top:115px;width:1px;height:1px;background:#6d6563"></div>
<div class="a" style="left:406px;top:118px;width:1px;height:1px;background:#6d6563"></div>
<div class="a" style="left:506px;top:112px;width:1px;height:1px;background:#6d6563"></div>
<div class="a" style="left:506px;top:115px;width:1px;height:1px;background:#6d6563"></div>
<div class="a" style="left:506px;top:118px;width:1px;height:1px;background:#6d6563"></div>
<div class="a" style="left:254px;top:384px;width:283px;height:5px;background:#c4bcb9"></div>
<svg class="a" style="left:539px;top:106px;" width="10" height="7" viewBox="0 0 10 7"><path d="M1 5.5 L5 1.5 L9 5.5" stroke="#6f6967" stroke-width="1.3" fill="none"/></svg>
<div class="a" style="left:537px;top:117px;width:13px;height:241px;border-radius:5px;background:#b0a8a5;box-shadow:inset 0 1px 2px rgba(0,0,0,0.35),0 1px 0 rgba(255,255,255,0.5)"></div>
<div class="a" style="left:539px;top:119px;width:9px;height:18px;border-radius:3px;background:linear-gradient(90deg,#e2dfdd,#eeecea 50%,#d6d2d0);box-shadow:0 0 0 0.6px #f4f2f1,0 0 0 2px rgba(75,68,65,0.8)"></div>
<svg class="a" style="left:539px;top:361px;" width="10" height="7" viewBox="0 0 10 7"><path d="M1 5.5 L5 1.5 L9 5.5" stroke="#f3f1f0" stroke-width="1.3" fill="none"/><path d="M1 5 L5 1 L9 5" stroke="#bdb6b3" stroke-width="1" fill="none" opacity="0.5"/></svg>
<svg class="a" style="left:539px;top:373px;" width="10" height="7" viewBox="0 0 10 7"><path d="M1 1.5 L5 5.5 L9 1.5" stroke="#1f1c1b" stroke-width="1.5" fill="none"/></svg>
<div class="a" style="left:456px;top:380px;width:352px;height:311px;border-radius:4px;box-shadow:0 0 2px 1.5px rgba(112,109,107,0.6)"></div>
<div class="a" style="left:456px;top:380px;width:352px;height:311px;border-radius:4px;background:linear-gradient(#f1efee 0px,#e6e3e1 25px,#c2b9b6 300px);box-shadow:inset 0 1px 0 #fff,inset 1px 0 0 rgba(255,255,255,0.7),inset -1px 0 0 rgba(255,255,255,0.7)"></div>
<svg class="a" style="left:460px;top:385px;" width="16" height="16" viewBox="0 0 16 16"><path d="M4 12.6 C6 11.5 7.5 10.5 9 8.5 C11 4.5 13 2.5 15.2 1.8 V14 H4Z" fill="#cfe0fa"/><path d="M3.8 9.4 L7.9 6.9 L12 12.6 L15.2 9.8 V14 H3.8Z" fill="#f6b6e2" opacity="0.95"/><path d="M4 12.6 C6 11.5 7.5 10.5 9 8.5" stroke="#b59be8" stroke-width="0.8" fill="none"/><path d="M2.3 0.5 V14.4 H16" stroke="#8a8888" stroke-width="0.8" fill="none"/><path d="M1.2 2 L2.3 0.5 L3.4 2 M14.8 13.3 L16.2 14.4 L14.8 15.5" stroke="#8a8888" stroke-width="0.6" fill="none"/><path d="M1.3 5.5 H2.3 M1.3 8.5 H2.3 M1.3 11.5 H2.3 M5 14.4 V15.4 M8 14.4 V15.4 M11 14.4 V15.4" stroke="#8a8888" stroke-width="0.7"/><path d="M9 8.5 C11 4.5 13 2.5 15.2 1.8" stroke="#4f8ff0" stroke-width="1.1" fill="none"/><path d="M3.8 9.4 L7.9 6.9 L12 12.6 L15.2 9.8" stroke="#c81f78" stroke-width="1.2" fill="none" stroke-linejoin="round"/></svg>
<div class="t" style="left:581.20px;top:386.00px;letter-spacing:0.474px;">Worksheet</div>
<svg class="a" style="left:752px;top:386px;opacity:1.0" width="12" height="13" viewBox="-6 -6 12 13"><circle cx="0" cy="0.6" r="5.2" fill="#fff" opacity="0.7"/><circle cx="0" cy="0" r="5" fill="#e9e7e6" stroke="#d5d1cf" stroke-width="0.5"/><path d="M-2.6 -1.1 L0 1.5 L2.6 -1.1" stroke="#1f1c1b" stroke-width="1.1" fill="none"/></svg>
<svg class="a" style="left:770px;top:386px;opacity:1.0" width="12" height="13" viewBox="-6 -6 12 13"><circle cx="0" cy="0.6" r="5.2" fill="#fff" opacity="0.7"/><circle cx="0" cy="0" r="5" fill="#e9e7e6" stroke="#d5d1cf" stroke-width="0.5"/><path d="M-2.6 1.1 L0 -1.5 L2.6 1.1" stroke="#1f1c1b" stroke-width="1.1" fill="none"/></svg>
<svg class="a" style="left:788px;top:386px;opacity:1.0" width="12" height="13" viewBox="-6 -6 12 13"><circle cx="0" cy="0.6" r="5.2" fill="#fff" opacity="0.7"/><circle cx="0" cy="0" r="5" fill="#e9e7e6" stroke="#d5d1cf" stroke-width="0.5"/><path d="M-2.5 -2.5 L2.5 2.5 M2.5 -2.5 L-2.5 2.5" stroke="#1f1c1b" stroke-width="0.95"/></svg>
<div class="a" style="left:461px;top:405px;width:342px;height:281px;border-radius:4px;border:1px solid #3daee9;background:#c0c0c0;box-shadow:inset 0 0 0 0.6px #3daee9,inset 0 0 3px 1px rgba(61,174,233,0.45),inset 0 3px 3px rgba(0,0,0,0.12)"></div>
<div class="a" style="left:507px;top:420px;width:261px;height:261px;background:#808080"></div>
<div class="a" style="left:501px;top:414px;width:262px;height:262px;background:#fff;border:1px solid #000"></div>
<div class="a" style="left:518px;top:431px;width:227px;height:227px;border:1px solid #6a6a6a"></div>
<svg class="a" style="left:0;top:0" width="1280" height="750" viewBox="0 0 1280 750"><path d="M561.9 457.5 V631.5" stroke="#9a9a9a" stroke-width="1" stroke-dasharray="1 2.5"/><path d="M544.5 474.9 H718.5" stroke="#9a9a9a" stroke-width="1" stroke-dasharray="1 2.5"/><path d="M596.7 457.5 V631.5" stroke="#9a9a9a" stroke-width="1" stroke-dasharray="1 2.5"/><path d="M544.5 509.7 H718.5" stroke="#9a9a9a" stroke-width="1" stroke-dasharray="1 2.5"/><path d="M631.5 457.5 V631.5" stroke="#9a9a9a" stroke-width="1" stroke-dasharray="1 2.5"/><path d="M544.5 544.5 H718.5" stroke="#9a9a9a" stroke-width="1" stroke-dasharray="1 2.5"/><path d="M666.3 457.5 V631.5" stroke="#9a9a9a" stroke-width="1" stroke-dasharray="1 2.5"/><path d="M544.5 579.3 H718.5" stroke="#9a9a9a" stroke-width="1" stroke-dasharray="1 2.5"/><path d="M701.1 457.5 V631.5" stroke="#9a9a9a" stroke-width="1" stroke-dasharray="1 2.5"/><path d="M544.5 614.1 H718.5" stroke="#9a9a9a" stroke-width="1" stroke-dasharray="1 2.5"/><path d="M579.3 457.5 V631.5" stroke="#c4c4c4" stroke-width="1"/><path d="M544.5 492.3 H718.5" stroke="#c4c4c4" stroke-width="1"/><path d="M614.1 457.5 V631.5" stroke="#c4c4c4" stroke-width="1"/><path d="M544.5 527.1 H718.5" stroke="#c4c4c4" stroke-width="1"/><path d="M648.9 457.5 V631.5" stroke="#c4c4c4" stroke-width="1"/><path d="M544.5 561.9 H718.5" stroke="#c4c4c4" stroke-width="1"/><path d="M683.7 457.5 V631.5" stroke="#c4c4c4" stroke-width="1"/><path d="M544.5 596.7 H718.5" stroke="#c4c4c4" stroke-width="1"/><rect x="544.5" y="457.5" width="174.0" height="174.0" fill="none" stroke="#1a1a1a" stroke-width="1"/><path d="M544.5 631.5 v-4 M544.5 457.5 v4 M544.5 457.5 h4 M718.5 457.5 h-4" stroke="#1a1a1a" stroke-width="1"/><path d="M561.9 631.5 v-2.5 M561.9 457.5 v2.5 M544.5 474.9 h2.5 M718.5 474.9 h-2.5" stroke="#1a1a1a" stroke-width="1"/><path d="M579.3 631.5 v-4 M579.3 457.5 v4 M544.5 492.3 h4 M718.5 492.3 h-4" stroke="#1a1a1a" stroke-width="1"/><path d="M596.7 631.5 v-2.5 M596.7 457.5 v2.5 M544.5 509.7 h2.5 M718.5 509.7 h-2.5" stroke="#1a1a1a" stroke-width="1"/><path d="M614.1 631.5 v-4 M614.1 457.5 v4 M544.5 527.1 h4 M718.5 527.1 h-4" stroke="#1a1a1a" stroke-width="1"/><path d="M631.5 631.5 v-2.5 M631.5 457.5 v2.5 M544.5 544.5 h2.5 M718.5 544.5 h-2.5" stroke="#1a1a1a" stroke-width="1"/><path d="M648.9 631.5 v-4 M648.9 457.5 v4 M544.5 561.9 h4 M718.5 561.9 h-4" stroke="#1a1a1a" stroke-width="1"/><path d="M666.3 631.5 v-2.5 M666.3 457.5 v2.5 M544.5 579.3 h2.5 M718.5 579.3 h-2.5" stroke="#1a1a1a" stroke-width="1"/><path d="M683.7 631.5 v-4 M683.7 457.5 v4 M544.5 596.7 h4 M718.5 596.7 h-4" stroke="#1a1a1a" stroke-width="1"/><path d="M701.1 631.5 v-2.5 M701.1 457.5 v2.5 M544.5 614.1 h2.5 M718.5 614.1 h-2.5" stroke="#1a1a1a" stroke-width="1"/><path d="M718.5 631.5 v-4 M718.5 457.5 v4 M544.5 631.5 h4 M718.5 631.5 h-4" stroke="#1a1a1a" stroke-width="1"/><text x="544.5" y="641.0" text-anchor="middle" font-family="Liberation Sans" font-size="7" fill="#1a1a1a">0.0</text><text x="542.0" y="634.0" text-anchor="end" font-family="Liberation Sans" font-size="7" fill="#1a1a1a">0.0</text><text x="579.3" y="641.0" text-anchor="middle" font-family="Liberation Sans" font-size="7" fill="#1a1a1a">0.2</text><text x="542.0" y="599.2" text-anchor="end" font-family="Liberation Sans" font-size="7" fill="#1a1a1a">0.2</text><text x="614.1" y="641.0" text-anchor="middle" font-family="Liberation Sans" font-size="7" fill="#1a1a1a">0.4</text><text x="542.0" y="564.4" text-anchor="end" font-family="Liberation Sans" font-size="7" fill="#1a1a1a">0.4</text><text x="648.9" y="641.0" text-anchor="middle" font-family="Liberation Sans" font-size="7" fill="#1a1a1a">0.6</text><text x="542.0" y="529.6" text-anchor="end" font-family="Liberation Sans" font-size="7" fill="#1a1a1a">0.6</text><text x="683.7" y="641.0" text-anchor="middle" font-family="Liberation Sans" font-size="7" fill="#1a1a1a">0.8</text><text x="542.0" y="494.8" text-anchor="end" font-family="Liberation Sans" font-size="7" fill="#1a1a1a">0.8</text><text x="718.5" y="641.0" text-anchor="middle" font-family="Liberation Sans" font-size="7" fill="#1a1a1a">1.0</text><text x="542.0" y="460.0" text-anchor="end" font-family="Liberation Sans" font-size="7" fill="#1a1a1a">1.0</text><text x="616.5" y="653.0" font-family="Liberation Sans" font-size="7.5" letter-spacing="0.6" fill="#1a1a1a">x axis 1</text><text transform="translate(530.5,559.5) rotate(-90)" x="0" y="0" font-family="Liberation Sans" font-size="7.5" letter-spacing="0.6" fill="#1a1a1a">y axis 1</text></svg>
<div class="a" style="left:836px;top:67px;width:443px;height:653px;border-radius:5px;border:1px solid rgba(255,255,255,0.3)"></div>
<div class="a" style="left:838px;top:69px;width:441px;height:651px;border-radius:4px;border:1px solid rgba(255,255,255,0.45)"></div>
<div class="a" style="left:837px;top:68px;width:441px;height:651px;border-radius:4px;border:1px solid rgba(90,80,75,0.2)"></div>
<div class="t" style="left:843.20px;top:73.00px;letter-spacing:0.401px;">Wo<span class="ul">r</span>ksheet properties</div>
<svg class="a" style="left:1239px;top:72px" width="12" height="12" viewBox="-6 -6 12 12"><circle cx="0" cy="0.5" r="5.2" fill="#ffffff" opacity="0.45"/><circle cx="0" cy="0" r="4.8" fill="#e3dfdd"/><path d="M0 -2.8 L2.8 0 L0 2.8 L-2.8 0Z" stroke="#1f1c1b" stroke-width="1.1" fill="none"/></svg>
<svg class="a" style="left:1258px;top:72px" width="12" height="12" viewBox="-6 -6 12 12"><circle cx="0" cy="0.5" r="5.2" fill="#ffffff" opacity="0.45"/><circle cx="0" cy="0" r="4.8" fill="#e3dfdd"/><path d="M-2.6 -2.6 L2.6 2.6 M2.6 -2.6 L-2.6 2.6" stroke="#1f1c1b" stroke-width="1.05"/></svg>
<div class="a" style="left:845px;top:122px;width:426px;height:555px;border-radius:0 4px 4px 4px;box-shadow:inset 0 0 0 1px rgba(255,255,255,0.92),0 1px 1px rgba(0,0,0,0.35),0 0 0 0.5px rgba(0,0,0,0.18)"></div>
<div class="a" style="left:910px;top:99px;width:85px;height:23px;border-radius:4px 4px 0 0;background:linear-gradient(#e7e4e2,#d2ccca 60%,#c9c3c0);box-shadow:inset 1px 1px 0 rgba(255,255,255,0.9),inset -1px 0 0 rgba(255,255,255,0.8),-0.5px -0.5px 0 rgba(0,0,0,0.12)"></div>
<div class="a" style="left:999px;top:99px;width:55px;height:23px;border-radius:4px 4px 0 0;background:linear-gradient(#e7e4e2,#d2ccca 60%,#c9c3c0);box-shadow:inset 1px 1px 0 rgba(255,255,255,0.9),inset -1px 0 0 rgba(255,255,255,0.8),-0.5px -0.5px 0 rgba(0,0,0,0.12)"></div>
<div class="a" style="left:845px;top:97px;width:61px;height:26px;border-radius:4px 4px 0 0;background:linear-gradient(#f0eeed,#e2dfdd 40%,#dcd8d6);box-shadow:inset 1px 1px 0 #fff,inset -1px 0 0 rgba(255,255,255,0.85),-0.5px -0.5px 0 rgba(0,0,0,0.15)"></div>
<div class="a" style="left:846px;top:121px;width:59px;height:2px;background:#dcd8d6"></div>
<div class="t" style="left:851.20px;top:104.00px;letter-spacing:0.258px;"><span class="ul">G</span>eneral</div>
<div class="t" style="left:916.70px;top:105.00px;letter-spacing:0.173px;">B<span class="ul">a</span>ckground</div>
<div class="t" style="left:1005.20px;top:105.00px;letter-spacing:0.431px;"><span class="ul">L</span>ayout</div>
<div class="t" style="left:847.70px;top:132.00px;letter-spacing:-0.246px;">Name</div>
<div class="a" style="left:931px;top:128px;width:334px;height:21px;border-radius:4px;background:#fff;box-shadow:inset 0 1px 1px rgba(0,0,0,0.45),inset 0 0 0 0.5px rgba(0,0,0,0.15),0 1px 0 rgba(255,255,255,0.6)"></div>
<div class="t" style="left:934.20px;top:132.00px;letter-spacing:0.287px;">Worksheet</div>
<div class="t" style="left:848.20px;top:160.00px;letter-spacing:-0.477px;">Comment</div>
<div class="a" style="left:931px;top:156px;width:334px;height:21px;border-radius:4px;background:#fff;box-shadow:inset 0 1px 1px rgba(0,0,0,0.45),inset 0 0 0 0.5px rgba(0,0,0,0.15),0 1px 0 rgba(255,255,255,0.6)"></div>
<div class="t" style="left:848.20px;top:197.00px;letter-spacing:-0.073px;color:#161312;font-weight:700;">Geometry:</div>
<div class="a" style="left:932px;top:217px;width:15px;height:15px;border-radius:4px;background:linear-gradient(#ebe9e8,#d9d5d3);box-shadow:0 1px 1.5px rgba(0,0,0,0.5),0 0 0 0.5px rgba(0,0,0,0.15),inset 0 1px 0 #fff"></div>
<div class="t" style="left:953.70px;top:218.00px;letter-spacing:0.324px;">rescale the <span class="ul">c</span>ontent</div>
<div class="t" style="left:848.20px;top:244.00px;letter-spacing:0.718px;">Size</div>
<div class="a" style="left:931px;top:240px;width:334px;height:21px;border-radius:4px;background:linear-gradient(#f1efee,#dedad8);box-shadow:0 1px 1.5px rgba(0,0,0,0.45),0 0 0 0.5px rgba(0,0,0,0.15),inset 0 1px 0 rgba(255,255,255,0.7)"></div>
<div class="t" style="left:934.20px;top:243.00px;letter-spacing:-0.419px;">Custom</div>
<svg class="a" style="left:1251px;top:248px;" width="10" height="6" viewBox="0 0 10 6"><path d="M1 0.8 L5 4.8 L9 0.8" stroke="#1f1c1b" stroke-width="1.5" fill="none"/></svg>
<div class="t" style="left:848.20px;top:273.00px;letter-spacing:1.054px;">Width</div>
<div class="a" style="left:931px;top:270px;width:334px;height:20px;border-radius:4px;background:#fff;box-shadow:inset 0 1px 1px rgba(0,0,0,0.45),inset 0 0 0 0.5px rgba(0,0,0,0.15),0 1px 0 rgba(255,255,255,0.6)"></div>
<div class="t" style="left:933.70px;top:273.00px;letter-spacing:0.117px;">15,00 cm</div>
<svg class="a" style="left:1251px;top:273px;" width="10" height="15" viewBox="0 0 10 15"><path d="M1 4.8 L5 0.8 L9 4.8 M1 9.8 L5 13.8 L9 9.8" stroke="#1f1c1b" stroke-width="1.5" fill="none"/></svg>
<div class="t" style="left:848.20px;top:301.00px;letter-spacing:0.724px;">Height</div>
<div class="a" style="left:931px;top:298px;width:334px;height:20px;border-radius:4px;background:#fff;box-shadow:inset 0 1px 1px rgba(0,0,0,0.45),inset 0 0 0 0.5px rgba(0,0,0,0.15),0 1px 0 rgba(255,255,255,0.6)"></div>
<div class="t" style="left:933.70px;top:301.00px;letter-spacing:0.117px;">15,00 cm</div>
<svg class="a" style="left:1251px;top:301px;" width="10" height="15" viewBox="0 0 10 15"><path d="M1 4.8 L5 0.8 L9 4.8 M1 9.8 L5 13.8 L9 9.8" stroke="#1f1c1b" stroke-width="1.5" fill="none"/></svg>
<div class="a" style="left:1131px;top:686px;width:22px;height:19px;border-radius:5px;background:linear-gradient(#ebe9e8,#d3cecc);box-shadow:0 1px 1.5px rgba(0,0,0,0.5),0 0 0 1px rgba(0,0,0,0.16),inset 0 1px 0 rgba(255,255,255,0.8)"></div>
<div class="a" style="left:1157px;top:686px;width:22px;height:19px;border-radius:5px;background:linear-gradient(#ebe9e8,#d3cecc);box-shadow:0 1px 1.5px rgba(0,0,0,0.5),0 0 0 1px rgba(0,0,0,0.16),inset 0 1px 0 rgba(255,255,255,0.8)"></div>
<div class="a" style="left:1183px;top:686px;width:22px;height:19px;border-radius:5px;background:linear-gradient(#ebe9e8,#d3cecc);box-shadow:0 1px 1.5px rgba(0,0,0,0.5),0 0 0 1px rgba(0,0,0,0.16),inset 0 1px 0 rgba(255,255,255,0.8)"></div>
<div class="a" style="left:1219px;top:686px;width:22px;height:19px;border-radius:5px;background:linear-gradient(#ebe9e8,#d3cecc);box-shadow:0 1px 1.5px rgba(0,0,0,0.5),0 0 0 1px rgba(0,0,0,0.16),inset 0 1px 0 rgba(255,255,255,0.8)"></div>
<div class="a" style="left:1245px;top:686px;width:22px;height:19px;border-radius:5px;background:linear-gradient(#ebe9e8,#d3cecc);box-shadow:0 1px 1.5px rgba(0,0,0,0.5),0 0 0 1px rgba(0,0,0,0.16),inset 0 1px 0 rgba(255,255,255,0.8)"></div>
<svg class="a" style="left:1134px;top:688px;" width="16" height="15" viewBox="0 0 16 15"><path d="M3 0.5 H10 L14 4.5 V9 H3Z" fill="#e6e6e6" stroke="#b0b0b0" stroke-width="0.8"/><path d="M10 0.5 V4.5 H14" fill="#d0d0d0" stroke="#b0b0b0" stroke-width="0.8"/><rect x="1" y="9" width="14" height="5.5" rx="0.5" fill="#cfcfcf" stroke="#b5b5b5" stroke-width="0.8"/><path d="M1 11.5 H15" stroke="#aaa" stroke-width="0.8"/></svg>
<svg class="a" style="left:1160px;top:688px;" width="16" height="15" viewBox="0 0 16 15"><rect x="0.5" y="0.5" width="14" height="14" rx="1" fill="#2f2f2f"/><rect x="2.5" y="1" width="10" height="6" fill="#f2f6fa"/><path d="M3.5 2.8 H11.5 M3.5 5 H11.5" stroke="#7fa0c4" stroke-width="1"/><rect x="3.5" y="9.5" width="8" height="5" fill="#bdbdbd"/><rect x="4.5" y="10.5" width="2" height="4" fill="#2f2f2f"/></svg>
<svg class="a" style="left:1186px;top:688px;" width="16" height="15" viewBox="0 0 16 15"><rect x="0.5" y="0.5" width="14" height="14" rx="1" fill="#2f2f2f"/><rect x="2.5" y="1" width="10" height="6" fill="#f2f6fa"/><path d="M3.5 2.8 H11.5 M3.5 5 H11.5" stroke="#7fa0c4" stroke-width="1"/><rect x="3.5" y="9.5" width="8" height="5" fill="#bdbdbd"/><path d="M2.5 13.5 L13 2" stroke="#1a1a1a" stroke-width="3.6"/><path d="M2.5 13.5 L13 2" stroke="#e8c020" stroke-width="2"/><path d="M1 15 L2.5 13.5" stroke="#333" stroke-width="1.2"/><circle cx="13.3" cy="1.8" r="1.6" fill="#d02020"/></svg>
<svg class="a" style="left:1222px;top:688px;" width="16" height="15" viewBox="0 0 16 15"><path d="M0.5 0.5 H9.5 V10.5 H0.5Z" fill="#e9e9e9" stroke="#b5b5b5" stroke-width="0.8"/><path d="M4.5 4.5 H14.5 V11.5 L11.5 14.5 H4.5Z" fill="#ededed" stroke="#b0b0b0" stroke-width="0.8"/><path d="M14.5 11.5 H11.5 V14.5" fill="#d5d5d5" stroke="#b0b0b0" stroke-width="0.8"/></svg>
<svg class="a" style="left:1248px;top:688px;" width="16" height="15" viewBox="0 0 16 15"><rect x="0.5" y="1.5" width="10" height="12.5" rx="1" fill="#bdbdbd" stroke="#7c7c7c" stroke-width="0.9"/><rect x="2" y="2.5" width="7" height="10.5" fill="#e6e6e6"/><rect x="2.5" y="0.3" width="6" height="2.5" fill="#f2f2f2" stroke="#888" stroke-width="0.6"/><path d="M5.5 5.5 H14.5 V12 L12 14.5 H5.5Z" fill="#efefef" stroke="#b0b0b0" stroke-width="0.8"/></svg>
</body></html>
